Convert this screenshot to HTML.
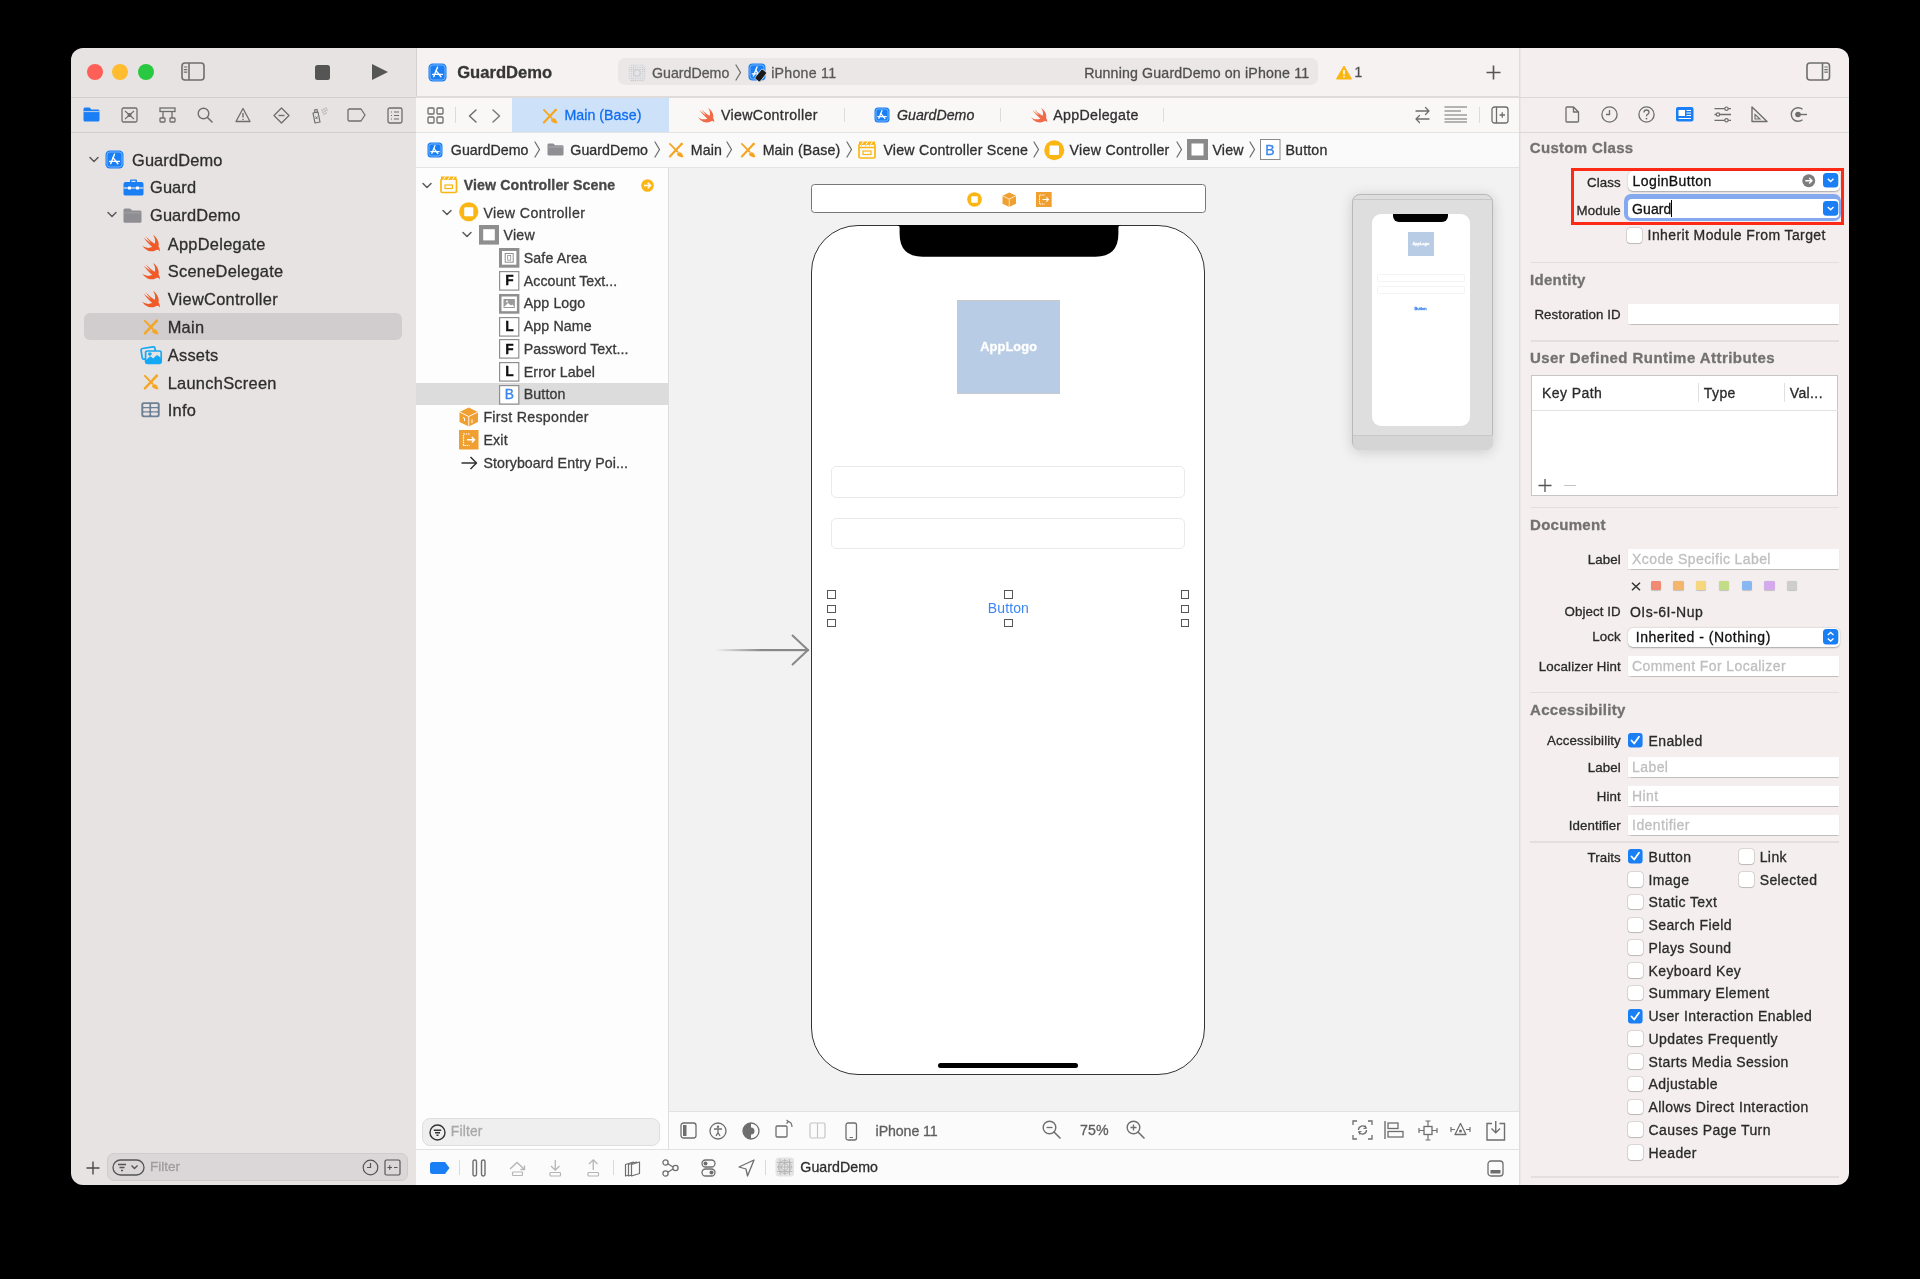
<!DOCTYPE html>
<html><head><meta charset="utf-8"><style>
html,body{margin:0;padding:0;}
body{width:1920px;height:1279px;background:#000;position:relative;overflow:hidden;font-family:"Liberation Sans", sans-serif;}
#w{position:absolute;left:0;top:0;width:1920px;height:1279px;clip-path:inset(48px 71px 94px 71px round 12px);will-change:transform;}
.t{position:absolute;white-space:nowrap;-webkit-font-smoothing:antialiased;-webkit-text-stroke-width:0.3px;}
.r{position:absolute;}
svg.r{overflow:visible;}
</style></head><body><div id="w">
<div class="r" style="left:71.00px;top:48.00px;width:345.00px;height:1137.00px;background:#e8e3e3;"></div>
<div class="r" style="left:416.00px;top:48.00px;width:1103.00px;height:49.00px;background:#f7f2f2;"></div>
<div class="r" style="left:1519.00px;top:48.00px;width:330.00px;height:1137.00px;background:#f4eeee;"></div>
<div class="r" style="left:71.00px;top:96.50px;width:345.00px;height:1.00px;background:#d2cdcd;"></div>
<div class="r" style="left:71.00px;top:132.00px;width:345.00px;height:1.00px;background:#d2cdcd;"></div>
<div class="r" style="left:415.50px;top:48.00px;width:1.00px;height:1137.00px;background:#d6d1d1;"></div>
<div class="r" style="left:416.00px;top:97.00px;width:1103.00px;height:35.00px;background:#faf7f7;"></div>
<div class="r" style="left:416.00px;top:96.20px;width:1103.00px;height:1.50px;background:#e0dbdb;"></div>
<div class="r" style="left:416.00px;top:132.00px;width:1103.00px;height:34.50px;background:#fbfafa;"></div>
<div class="r" style="left:416.00px;top:131.50px;width:1103.00px;height:1.00px;background:#e6e3e3;"></div>
<div class="r" style="left:416.00px;top:166.50px;width:1103.00px;height:1.00px;background:#e3e3e3;"></div>
<div class="r" style="left:416.00px;top:167.50px;width:252.00px;height:981.50px;background:#fdfdfd;"></div>
<div class="r" style="left:668.00px;top:167.50px;width:851.00px;height:943.50px;background:#f2f2f2;"></div>
<div class="r" style="left:668.00px;top:1111.00px;width:851.00px;height:38.00px;background:#fbfbfb;"></div>
<div class="r" style="left:668.00px;top:1110.50px;width:851.00px;height:1.00px;background:#e2e2e2;"></div>
<div class="r" style="left:416.00px;top:1149.00px;width:1103.00px;height:36.00px;background:#fbfbfb;"></div>
<div class="r" style="left:416.00px;top:1148.50px;width:1103.00px;height:1.00px;background:#e2e2e2;"></div>
<div class="r" style="left:1518.80px;top:48.00px;width:1.40px;height:1137.00px;background:#dfdcdc;"></div>
<div class="r" style="left:1520.20px;top:48.00px;width:1.20px;height:1137.00px;background:#ebe7e8;"></div>
<div class="r" style="left:667.50px;top:167.50px;width:1.00px;height:981.50px;background:#dedede;"></div>
<div class="r" style="left:1519.00px;top:96.50px;width:330.00px;height:1.00px;background:#ddd8d8;"></div>
<div class="r" style="left:1519.00px;top:132.00px;width:330.00px;height:1.00px;background:#ddd8d8;"></div>
<div class="r" style="left:87.00px;top:64.40px;width:16.00px;height:16.00px;background:#fe5f57;border-radius:8px;"></div>
<div class="r" style="left:112.30px;top:64.40px;width:16.00px;height:16.00px;background:#febc2e;border-radius:8px;"></div>
<div class="r" style="left:137.50px;top:64.40px;width:16.00px;height:16.00px;background:#28c840;border-radius:8px;"></div>
<svg class="r" style="left:181.00px;top:62.00px;" width="24" height="20" viewBox="0 0 24 20"><rect x="1" y="1" width="22" height="17" rx="3" fill="none" stroke="#6e6e6e" stroke-width="1.6"/><path d="M8,1 L8,18" stroke="#6e6e6e" stroke-width="1.6"/><path d="M2.8,5 L6.3,5 M2.8,7.6 L6.3,7.6 M2.8,10.2 L6.3,10.2" stroke="#6e6e6e" stroke-width="1.2"/></svg>
<div class="r" style="left:314.50px;top:64.70px;width:15.50px;height:15.50px;background:#555555;border-radius:2.5px;"></div>
<svg class="r" style="left:371.00px;top:63.00px;" width="18" height="18" viewBox="0 0 18 18"><path d="M1,1 L17,9 L1,17 Z" fill="#555"/></svg>
<svg class="r" style="left:83.00px;top:107.00px;" width="17" height="15" viewBox="0 0 17 15"><path fill="#1a7ff5" d="M0.5,2 Q0.5,0.5 2,0.5 L6,0.5 Q7,0.5 7.6,1.4 L8.3,2.4 L15,2.4 Q16.5,2.4 16.5,4 L16.5,13 Q16.5,14.5 15,14.5 L2,14.5 Q0.5,14.5 0.5,13 Z"/><path d="M0.5,4.6 L16.5,4.6" stroke="#e8e3e3" stroke-width="0.8"/></svg>
<svg class="r" style="left:121.00px;top:107.00px;" width="17" height="16" viewBox="0 0 17 16"><rect x="1" y="1" width="15" height="14" rx="1.5" fill="none" stroke="#6e6e6e" stroke-width="1.3"/><path d="M4,4 L13,12 M13,4 L4,12" stroke="#6e6e6e" stroke-width="1.1"/><circle cx="8.5" cy="8" r="2" fill="#6e6e6e"/></svg>
<svg class="r" style="left:158.50px;top:107.00px;" width="17" height="16" viewBox="0 0 17 16"><rect x="1" y="1" width="15" height="3.5" fill="none" stroke="#6e6e6e" stroke-width="1.3"/><path d="M4,4.5 L4,11 M13,4.5 L13,11" stroke="#6e6e6e" stroke-width="1.3"/><rect x="1" y="11" width="5" height="4" rx="0.8" fill="none" stroke="#6e6e6e" stroke-width="1.3"/><rect x="11" y="11" width="5" height="4" rx="0.8" fill="none" stroke="#6e6e6e" stroke-width="1.3"/></svg>
<svg class="r" style="left:196.50px;top:107.00px;" width="16" height="16" viewBox="0 0 16 16"><circle cx="6.5" cy="6.5" r="5.3" fill="none" stroke="#6e6e6e" stroke-width="1.4"/><path d="M10.5,10.5 L15,15" stroke="#6e6e6e" stroke-width="1.6" stroke-linecap="round"/></svg>
<svg class="r" style="left:234.50px;top:107.00px;" width="16" height="16" viewBox="0 0 16 16"><path d="M8,1.5 L15,14.5 L1,14.5 Z" fill="none" stroke="#6e6e6e" stroke-width="1.3" stroke-linejoin="round"/><path d="M8,6 L8,10.5" stroke="#6e6e6e" stroke-width="1.4"/><circle cx="8" cy="12.5" r="0.8" fill="#6e6e6e"/></svg>
<svg class="r" style="left:272.50px;top:106.50px;" width="17" height="17" viewBox="0 0 17 17"><path d="M8.5,1 L16,8.5 L8.5,16 L1,8.5 Z" fill="none" stroke="#6e6e6e" stroke-width="1.3" stroke-linejoin="round"/><path d="M5.5,8.5 L11.5,8.5" stroke="#6e6e6e" stroke-width="1.4"/></svg>
<svg class="r" style="left:309.50px;top:106.00px;" width="19" height="18" viewBox="0 0 19 18"><path d="M3,7 L8,6 L10,16 L5,17 Z" fill="none" stroke="#6e6e6e" stroke-width="1.2" stroke-linejoin="round"/><path d="M4.5,4 L7,3.5 L7.5,6 L5,6.5 Z" fill="none" stroke="#6e6e6e" stroke-width="1.1"/><path d="M5.5,10.5 L7.5,13 M7.5,10.5 L5.5,13" stroke="#6e6e6e" stroke-width="1"/><g fill="#6e6e6e"><circle cx="12" cy="4" r="0.6"/><circle cx="14" cy="3" r="0.6"/><circle cx="16" cy="2" r="0.6"/><circle cx="13" cy="6" r="0.6"/><circle cx="15" cy="5" r="0.6"/><circle cx="17" cy="4" r="0.6"/><circle cx="14" cy="8" r="0.6"/><circle cx="16" cy="7" r="0.6"/></g></svg>
<svg class="r" style="left:347.00px;top:107.00px;" width="19" height="16" viewBox="0 0 19 16"><path d="M1,3.5 Q1,2 2.5,2 L14,2 L18,8 L14,14 L2.5,14 Q1,14 1,12.5 Z" fill="none" stroke="#6e6e6e" stroke-width="1.3" stroke-linejoin="round"/></svg>
<svg class="r" style="left:386.50px;top:106.50px;" width="16" height="17" viewBox="0 0 16 17"><rect x="1" y="1" width="14" height="15" rx="1.8" fill="none" stroke="#6e6e6e" stroke-width="1.3"/><path d="M4,5 L5,5 M7,5 L12,5 M4,8.5 L5,8.5 M7,8.5 L12,8.5 M4,12 L5,12 M7,12 L12,12" stroke="#6e6e6e" stroke-width="1.2"/></svg>
<svg class="r" style="left:89.00px;top:156.00px;" width="10" height="8" viewBox="0 0 10 8"><path d="M1,1.5 L5,5.5 L9,1.5" stroke="#5a5a5a" stroke-width="1.5" fill="none" stroke-linecap="round" stroke-linejoin="round"/></svg>
<svg class="r" style="left:105.00px;top:150.00px;" width="19" height="19" viewBox="0 0 19 19"><rect x="0.5" y="0.5" width="18" height="18" rx="4.2" fill="#1a7ff5"/><rect x="2" y="2" width="15" height="15" rx="2.9" fill="none" stroke="#8cc0ff" stroke-width="0.8"/><g stroke="#fff" stroke-width="1.43" stroke-linecap="round" fill="none"><path d="M9.5,4.2 L5.7,13.7"/><path d="M8.0,7.6 L12.9,13.7"/><path d="M4.6,11.4 L14.4,11.4"/></g></svg>
<div class="t" style="top:151.52px;font-size:16.4px;line-height:16.4px;color:#2e2e2e;letter-spacing:0.13px;left:132.00px;">GuardDemo</div>
<svg class="r" style="left:122.50px;top:179.00px;" width="21" height="17" viewBox="0 0 21 17"><path fill="#1a7ff5" d="M7,3 L7,1.5 Q7,0.5 8,0.5 L13,0.5 Q14,0.5 14,1.5 L14,3 L18.5,3 Q20.5,3 20.5,5 L20.5,15 Q20.5,16.5 18.5,16.5 L2.5,16.5 Q0.5,16.5 0.5,15 L0.5,5 Q0.5,3 2.5,3 Z M8.5,1.8 L8.5,3 L12.5,3 L12.5,1.8 Z"/><path d="M0.5,9 L20.5,9" stroke="#e8e3e3" stroke-width="1.2"/><rect x="5" y="7.5" width="3" height="3" rx="0.5" fill="#fff"/><rect x="13" y="7.5" width="3" height="3" rx="0.5" fill="#fff"/></svg>
<div class="t" style="top:179.42px;font-size:16.4px;line-height:16.4px;color:#2e2e2e;letter-spacing:0.13px;left:150.00px;">Guard</div>
<svg class="r" style="left:106.50px;top:211.00px;" width="10" height="8" viewBox="0 0 10 8"><path d="M1,1.5 L5,5.5 L9,1.5" stroke="#5a5a5a" stroke-width="1.5" fill="none" stroke-linecap="round" stroke-linejoin="round"/></svg>
<svg class="r" style="left:123.00px;top:207.50px;" width="19" height="15.5" viewBox="0 0 19 15.5"><path fill="#8e8e93" d="M0.5,2 Q0.5,0.5 2,0.5 L6.5,0.5 Q7.5,0.5 8.2,1.5 L9,2.5 L17,2.5 Q18.5,2.5 18.5,4 L18.5,13.5 Q18.5,14.8 17,14.8 L2,14.8 Q0.5,14.8 0.5,13.5 Z"/><path fill="#a9a9ad" d="M0.5,4.5 L18.5,4.5 L18.5,5.2 L0.5,5.2 Z"/></svg>
<div class="t" style="top:207.22px;font-size:16.4px;line-height:16.4px;color:#2e2e2e;letter-spacing:0.13px;left:150.00px;">GuardDemo</div>
<div class="r" style="left:84.00px;top:312.50px;width:318.00px;height:27.50px;background:#d1cccd;border-radius:6px;"></div>
<svg class="r" style="left:141.50px;top:235.00px;" width="18" height="17" viewBox="0 0 18 17"><svg x="0" y="0" width="18" height="17" viewBox="2.4 3.3 18.2 16.9" preserveAspectRatio="none"><path fill="#f05a28" d="M13.543 3.41c4.114 2.47 6.545 7.162 5.549 11.131-.024.093-.05.181-.076.272l.002.001c2.062 2.538 1.5 5.258 1.236 4.745-1.072-2.086-3.066-1.568-4.088-1.043a6.803 6.803 0 0 1-.281.158l-.02.012-.002.002c-2.115 1.123-4.957 1.205-7.812-.022a12.568 12.568 0 0 1-5.640-4.838c.649.48 1.350.902 2.097 1.252 3.019 1.414 6.051 1.311 8.197-.002C9.651 12.730 7.101 9.670 5.146 7.191a10.628 10.628 0 0 1-1.005-1.384c2.340 2.142 6.038 4.830 7.365 5.576C8.690 8.408 6.208 4.743 6.324 4.860c4.436 4.470 8.528 6.996 8.528 6.996.154.085.270.154.360.213.085-.215.160-.437.224-.668.711-2.588-.090-5.548-1.893-7.992z"/></svg></svg>
<div class="t" style="top:235.62px;font-size:16.4px;line-height:16.4px;color:#2e2e2e;letter-spacing:0.28px;left:167.70px;">AppDelegate</div>
<svg class="r" style="left:141.50px;top:262.78px;" width="18" height="17" viewBox="0 0 18 17"><svg x="0" y="0" width="18" height="17" viewBox="2.4 3.3 18.2 16.9" preserveAspectRatio="none"><path fill="#f05a28" d="M13.543 3.41c4.114 2.47 6.545 7.162 5.549 11.131-.024.093-.05.181-.076.272l.002.001c2.062 2.538 1.5 5.258 1.236 4.745-1.072-2.086-3.066-1.568-4.088-1.043a6.803 6.803 0 0 1-.281.158l-.02.012-.002.002c-2.115 1.123-4.957 1.205-7.812-.022a12.568 12.568 0 0 1-5.640-4.838c.649.48 1.350.902 2.097 1.252 3.019 1.414 6.051 1.311 8.197-.002C9.651 12.730 7.101 9.670 5.146 7.191a10.628 10.628 0 0 1-1.005-1.384c2.340 2.142 6.038 4.830 7.365 5.576C8.690 8.408 6.208 4.743 6.324 4.860c4.436 4.470 8.528 6.996 8.528 6.996.154.085.270.154.360.213.085-.215.160-.437.224-.668.711-2.588-.090-5.548-1.893-7.992z"/></svg></svg>
<div class="t" style="top:263.40px;font-size:16.4px;line-height:16.4px;color:#2e2e2e;letter-spacing:0.28px;left:167.70px;">SceneDelegate</div>
<svg class="r" style="left:141.50px;top:290.56px;" width="18" height="17" viewBox="0 0 18 17"><svg x="0" y="0" width="18" height="17" viewBox="2.4 3.3 18.2 16.9" preserveAspectRatio="none"><path fill="#f05a28" d="M13.543 3.41c4.114 2.47 6.545 7.162 5.549 11.131-.024.093-.05.181-.076.272l.002.001c2.062 2.538 1.5 5.258 1.236 4.745-1.072-2.086-3.066-1.568-4.088-1.043a6.803 6.803 0 0 1-.281.158l-.02.012-.002.002c-2.115 1.123-4.957 1.205-7.812-.022a12.568 12.568 0 0 1-5.640-4.838c.649.48 1.350.902 2.097 1.252 3.019 1.414 6.051 1.311 8.197-.002C9.651 12.730 7.101 9.670 5.146 7.191a10.628 10.628 0 0 1-1.005-1.384c2.340 2.142 6.038 4.830 7.365 5.576C8.690 8.408 6.208 4.743 6.324 4.860c4.436 4.470 8.528 6.996 8.528 6.996.154.085.270.154.360.213.085-.215.160-.437.224-.668.711-2.588-.090-5.548-1.893-7.992z"/></svg></svg>
<div class="t" style="top:291.18px;font-size:16.4px;line-height:16.4px;color:#2e2e2e;letter-spacing:0.28px;left:167.70px;">ViewController</div>
<svg class="r" style="left:142.50px;top:318.84px;" width="16" height="16" viewBox="0 0 16 16"><g stroke="#f5a623" stroke-linecap="round" fill="none"><path d="M13.6,1.9 L1.9,14.4" stroke-width="2.42"/><path d="M1.9,1.9 L9.6,9.8" stroke-width="1.99"/></g><circle cx="13.7" cy="1.9" r="1.31" fill="#f5a623"/><path fill="#f5a623" d="M9.2,11.4 C10.2,9.9 12.2,9.7 13.4,11 C14.6,12.2 15,13.8 15.6,15.3 C13.8,15.4 11.6,15.2 10.3,14.1 C9.3,13.3 8.8,12.2 9.2,11.4 Z"/></svg>
<div class="t" style="top:318.96px;font-size:16.4px;line-height:16.4px;color:#2e2e2e;letter-spacing:0.28px;left:167.70px;">Main</div>
<svg class="r" style="left:139.50px;top:345.42px;" width="23" height="19.5" viewBox="0 0 23 19.5"><rect x="1.6" y="2.6" width="14" height="10.8" rx="1.6" transform="rotate(-9 8.6 8)" fill="#e8e3e3" stroke="#14a9f5" stroke-width="1.7"/><rect x="5.6" y="6" width="15.6" height="12.4" rx="1.6" fill="#e8e3e3" stroke="#14a9f5" stroke-width="1.7"/><path d="M5.6,15.5 L9.5,11.8 Q10.3,11.2 11.1,11.8 L13.2,13.4 L16.2,10.6 Q17.1,9.9 18,10.6 L21.2,13.2 L21.2,17.4 Q21.2,18.4 20.2,18.4 L6.6,18.4 Q5.6,18.4 5.6,17.4 Z" fill="#14a9f5"/><path d="M8.2,8.4 Q8.2,7.6 9,7.6 L10.8,7.6 Q11.6,7.6 11.6,8.4 L11.6,9.6 Q11.6,10.4 10.8,10.4 L9.9,10.4 L9,11.4 L9,10.4 Q8.2,10.4 8.2,9.6 Z" fill="#14a9f5"/></svg>
<div class="t" style="top:346.74px;font-size:16.4px;line-height:16.4px;color:#2e2e2e;letter-spacing:0.28px;left:167.70px;">Assets</div>
<svg class="r" style="left:142.50px;top:374.40px;" width="16" height="16" viewBox="0 0 16 16"><g stroke="#f5a623" stroke-linecap="round" fill="none"><path d="M13.6,1.9 L1.9,14.4" stroke-width="2.42"/><path d="M1.9,1.9 L9.6,9.8" stroke-width="1.99"/></g><circle cx="13.7" cy="1.9" r="1.31" fill="#f5a623"/><path fill="#f5a623" d="M9.2,11.4 C10.2,9.9 12.2,9.7 13.4,11 C14.6,12.2 15,13.8 15.6,15.3 C13.8,15.4 11.6,15.2 10.3,14.1 C9.3,13.3 8.8,12.2 9.2,11.4 Z"/></svg>
<div class="t" style="top:374.52px;font-size:16.4px;line-height:16.4px;color:#2e2e2e;letter-spacing:0.28px;left:167.70px;">LaunchScreen</div>
<svg class="r" style="left:141.00px;top:402.38px;" width="19" height="15.5" viewBox="0 0 19 15.5"><rect x="0.3" y="0.3" width="18.4" height="14.9" rx="2.2" fill="#6d8196"/><g fill="#e8e3e3"><rect x="2.2" y="2.1" width="6.3" height="3" rx="0.8"/><rect x="10" y="2.1" width="6.8" height="3" rx="0.8"/><rect x="2.2" y="6.25" width="6.3" height="3" rx="0.8"/><rect x="10" y="6.25" width="6.8" height="3" rx="0.8"/><rect x="2.2" y="10.4" width="6.3" height="3" rx="0.8"/><rect x="10" y="10.4" width="6.8" height="3" rx="0.8"/></g></svg>
<div class="t" style="top:402.30px;font-size:16.4px;line-height:16.4px;color:#2e2e2e;letter-spacing:0.28px;left:167.70px;">Info</div>
<svg class="r" style="left:86.00px;top:1161.00px;" width="14" height="14" viewBox="0 0 14 14"><path d="M7,0.5 L7,13.5 M0.5,7 L13.5,7" stroke="#4a4a4a" stroke-width="1.4"/></svg>
<div class="r" style="left:106.50px;top:1153.30px;width:301.50px;height:28.00px;background:#dbd6d7;border:1px solid #d0cbcc;box-sizing:border-box;border-radius:7px;"></div>
<svg class="r" style="left:112.00px;top:1159.00px;" width="33" height="17" viewBox="0 0 33 17"><rect x="1" y="1" width="31" height="15" rx="7.5" fill="none" stroke="#555" stroke-width="1.3"/><path d="M6,5.5 L14,5.5 M7.5,8.5 L12.5,8.5 M9,11.5 L11,11.5" stroke="#555" stroke-width="1.3"/><path d="M19.5,6.5 L22.5,9.5 L25.5,6.5" stroke="#555" stroke-width="1.4" fill="none"/></svg>
<div class="t" style="top:1160.37px;font-size:13.5px;line-height:13.5px;color:#a09c9d;left:150.00px;">Filter</div>
<svg class="r" style="left:362.00px;top:1159.00px;" width="17" height="17" viewBox="0 0 17 17"><circle cx="8.5" cy="8.5" r="7.3" fill="none" stroke="#555" stroke-width="1.2"/><path d="M8.5,4 L8.5,8.5 L5,8.5" stroke="#555" stroke-width="1.2" fill="none"/></svg>
<svg class="r" style="left:384.00px;top:1159.00px;" width="17" height="17" viewBox="0 0 17 17"><rect x="1" y="1" width="15" height="15" rx="1.5" fill="none" stroke="#555" stroke-width="1.2"/><path d="M3.5,8.5 L8,8.5 M5.75,6.25 L5.75,10.75 M10,8.5 L13.5,8.5" stroke="#555" stroke-width="1.1"/></svg>
<svg class="r" style="left:428.00px;top:63.00px;" width="19" height="19" viewBox="0 0 19 19"><rect x="0.5" y="0.5" width="18" height="18" rx="4.2" fill="#1a7ff5"/><rect x="2" y="2" width="15" height="15" rx="2.9" fill="none" stroke="#8cc0ff" stroke-width="0.8"/><g stroke="#fff" stroke-width="1.43" stroke-linecap="round" fill="none"><path d="M9.5,4.2 L5.7,13.7"/><path d="M8.0,7.6 L12.9,13.7"/><path d="M4.6,11.4 L14.4,11.4"/></g></svg>
<div class="t" style="top:64.95px;font-size:16.6px;line-height:16.6px;color:#363636;font-weight:700;left:457.20px;">GuardDemo</div>
<div class="r" style="left:618.00px;top:58.40px;width:700.00px;height:27.00px;background:#ece7e7;border-radius:7px;"></div>
<svg class="r" style="left:627.50px;top:63.50px;" width="18" height="18" viewBox="0 0 18 18"><defs><pattern id="dp" width="2.2" height="2.2" patternUnits="userSpaceOnUse"><circle cx="1.1" cy="1.1" r="0.6" fill="#bfc3c9"/></pattern></defs><rect x="0.5" y="0.5" width="17" height="17" rx="4.5" fill="#e6e4e6"/><rect x="0.5" y="0.5" width="17" height="17" rx="4.5" fill="url(#dp)"/><circle cx="9" cy="9" r="3.3" fill="#e6e4e6" stroke="#c4c7cc" stroke-width="0.9"/></svg>
<div class="t" style="top:65.78px;font-size:14.2px;line-height:14.2px;color:#595959;left:652.00px;">GuardDemo</div>
<svg class="r" style="left:735.00px;top:63.50px;" width="8" height="18" viewBox="0 0 8 18"><path d="M1,1 L5.5,8.5 L1,16" stroke="#6b6b6b" stroke-width="1.2" fill="none" stroke-linecap="round"/></svg>
<svg class="r" style="left:747.50px;top:63.00px;" width="19" height="19" viewBox="0 0 19 19"><rect x="0.5" y="0.5" width="17" height="17" rx="4.0" fill="#1a7ff5"/><rect x="2" y="2" width="14" height="14" rx="2.7" fill="none" stroke="#8cc0ff" stroke-width="0.8"/><g stroke="#fff" stroke-width="1.35" stroke-linecap="round" fill="none"><path d="M9.0,4.0 L5.4,13.0"/><path d="M7.6,7.2 L12.2,13.0"/><path d="M4.3,10.8 L13.7,10.8"/></g><rect x="9.5" y="6.5" width="6.5" height="12" rx="1.3" transform="rotate(38 12.75 12.5)" fill="#1a1a1a" stroke="#fff" stroke-width="0.6"/></svg>
<div class="t" style="top:65.78px;font-size:14.2px;line-height:14.2px;color:#595959;letter-spacing:0.25px;left:771.20px;">iPhone 11</div>
<div class="t" style="top:65.78px;font-size:14.2px;line-height:14.2px;color:#505050;letter-spacing:0.15px;right:610.80px;">Running GuardDemo on iPhone 11</div>
<svg class="r" style="left:1335.50px;top:64.50px;" width="15" height="14.5" viewBox="0 0 15 14.5"><path d="M8,1 L15.5,14 L0.5,14 Z" fill="#fbb614" stroke="#fbb614" stroke-linejoin="round" stroke-width="1"/><path d="M8,5 L8,9.5" stroke="#fff" stroke-width="1.6"/><circle cx="8" cy="11.6" r="0.9" fill="#fff"/></svg>
<div class="t" style="top:66.32px;font-size:13.8px;line-height:13.8px;color:#505050;left:1354.50px;">1</div>
<svg class="r" style="left:1486.00px;top:64.50px;" width="15" height="15" viewBox="0 0 15 15"><path d="M7.5,0.5 L7.5,14.5 M0.5,7.5 L14.5,7.5" stroke="#555" stroke-width="1.6"/></svg>
<svg class="r" style="left:427.00px;top:106.50px;" width="17" height="17" viewBox="0 0 17 17"><g fill="none" stroke="#6e6e6e" stroke-width="1.3"><rect x="1" y="1" width="6" height="6" rx="1"/><rect x="10" y="1" width="6" height="6" rx="1"/><rect x="1" y="10" width="6" height="6" rx="1"/><rect x="10" y="10" width="6" height="6" rx="1"/></g></svg>
<div class="r" style="left:455.00px;top:107.00px;width:1.00px;height:16.00px;background:#dcdcdc;"></div>
<svg class="r" style="left:466.50px;top:108.50px;" width="11" height="14" viewBox="0 0 11 14"><path d="M9,1 L2.5,7 L9,13" stroke="#6e6e6e" stroke-width="1.5" fill="none" stroke-linecap="round" stroke-linejoin="round"/></svg>
<svg class="r" style="left:490.50px;top:108.50px;" width="11" height="14" viewBox="0 0 11 14"><path d="M2,1 L8.5,7 L2,13" stroke="#7a7a7a" stroke-width="1.5" fill="none" stroke-linecap="round" stroke-linejoin="round"/></svg>
<div class="r" style="left:512.00px;top:97.50px;width:156.50px;height:34.50px;background:#cde1f8;"></div>
<svg class="r" style="left:542.00px;top:107.50px;" width="15" height="15" viewBox="0 0 15 15"><g stroke="#f5a623" stroke-linecap="round" fill="none"><path d="M13.6,1.9 L1.9,14.4" stroke-width="2.18"/><path d="M1.9,1.9 L9.6,9.8" stroke-width="1.80"/></g><circle cx="13.7" cy="1.9" r="1.19" fill="#f5a623"/><path fill="#f5a623" d="M9.2,11.4 C10.2,9.9 12.2,9.7 13.4,11 C14.6,12.2 15,13.8 15.6,15.3 C13.8,15.4 11.6,15.2 10.3,14.1 C9.3,13.3 8.8,12.2 9.2,11.4 Z"/></svg>
<div class="t" style="top:107.58px;font-size:14.2px;line-height:14.2px;color:#0f6ef0;letter-spacing:0.05px;left:564.40px;">Main (Base)</div>
<svg class="r" style="left:698.00px;top:107.80px;" width="16.5" height="15" viewBox="0 0 16.5 15"><svg x="0" y="0" width="16.5" height="15" viewBox="2.4 3.3 18.2 16.9" preserveAspectRatio="none"><path fill="#f26b48" d="M13.543 3.41c4.114 2.47 6.545 7.162 5.549 11.131-.024.093-.05.181-.076.272l.002.001c2.062 2.538 1.5 5.258 1.236 4.745-1.072-2.086-3.066-1.568-4.088-1.043a6.803 6.803 0 0 1-.281.158l-.02.012-.002.002c-2.115 1.123-4.957 1.205-7.812-.022a12.568 12.568 0 0 1-5.640-4.838c.649.48 1.350.902 2.097 1.252 3.019 1.414 6.051 1.311 8.197-.002C9.651 12.730 7.101 9.670 5.146 7.191a10.628 10.628 0 0 1-1.005-1.384c2.340 2.142 6.038 4.830 7.365 5.576C8.690 8.408 6.208 4.743 6.324 4.860c4.436 4.470 8.528 6.996 8.528 6.996.154.085.270.154.360.213.085-.215.160-.437.224-.668.711-2.588-.090-5.548-1.893-7.992z"/></svg></svg>
<div class="t" style="top:107.58px;font-size:14.2px;line-height:14.2px;color:#303030;letter-spacing:0.35px;left:720.90px;">ViewController</div>
<div class="r" style="left:843.50px;top:107.50px;width:1.00px;height:14.00px;background:#dcdcdc;"></div>
<svg class="r" style="left:874.00px;top:106.50px;" width="16" height="16" viewBox="0 0 16 16"><rect x="0.5" y="0.5" width="15" height="15" rx="3.5" fill="#1a7ff5"/><rect x="2" y="2" width="12" height="12" rx="2.4" fill="none" stroke="#8cc0ff" stroke-width="0.8"/><g stroke="#fff" stroke-width="1.20" stroke-linecap="round" fill="none"><path d="M8.0,3.5 L4.8,11.5"/><path d="M6.7,6.4 L10.9,11.5"/><path d="M3.8,9.6 L12.2,9.6"/></g></svg>
<div class="t" style="top:107.58px;font-size:14.2px;line-height:14.2px;color:#303030;font-style:italic;left:897.00px;">GuardDemo</div>
<div class="r" style="left:999.50px;top:107.50px;width:1.00px;height:14.00px;background:#dcdcdc;"></div>
<svg class="r" style="left:1030.50px;top:107.80px;" width="16.5" height="15" viewBox="0 0 16.5 15"><svg x="0" y="0" width="16.5" height="15" viewBox="2.4 3.3 18.2 16.9" preserveAspectRatio="none"><path fill="#f26b48" d="M13.543 3.41c4.114 2.47 6.545 7.162 5.549 11.131-.024.093-.05.181-.076.272l.002.001c2.062 2.538 1.5 5.258 1.236 4.745-1.072-2.086-3.066-1.568-4.088-1.043a6.803 6.803 0 0 1-.281.158l-.02.012-.002.002c-2.115 1.123-4.957 1.205-7.812-.022a12.568 12.568 0 0 1-5.640-4.838c.649.48 1.350.902 2.097 1.252 3.019 1.414 6.051 1.311 8.197-.002C9.651 12.730 7.101 9.670 5.146 7.191a10.628 10.628 0 0 1-1.005-1.384c2.340 2.142 6.038 4.830 7.365 5.576C8.690 8.408 6.208 4.743 6.324 4.860c4.436 4.470 8.528 6.996 8.528 6.996.154.085.270.154.360.213.085-.215.160-.437.224-.668.711-2.588-.090-5.548-1.893-7.992z"/></svg></svg>
<div class="t" style="top:107.58px;font-size:14.2px;line-height:14.2px;color:#303030;letter-spacing:0.3px;left:1053.30px;">AppDelegate</div>
<div class="r" style="left:1163.00px;top:107.50px;width:1.00px;height:14.00px;background:#dcdcdc;"></div>
<svg class="r" style="left:1414.00px;top:105.50px;" width="17" height="18" viewBox="0 0 17 18"><g stroke="#6e6e6e" stroke-width="1.3" fill="none" stroke-linecap="round" stroke-linejoin="round"><path d="M2,5 L15,5 M11.5,1.5 L15,5 L11.5,8.5"/><path d="M15,13 L2,13 M5.5,9.5 L2,13 L5.5,16.5"/></g></svg>
<svg class="r" style="left:1444.00px;top:106.00px;" width="24" height="17" viewBox="0 0 24 17"><g stroke="#6e6e6e" stroke-width="1.2"><path d="M0.5,1 L23,1 M0.5,5 L17,5 M0.5,9 L23,9 M0.5,13 L23,13 M0.5,16 L23,16"/></g></svg>
<div class="r" style="left:1478.50px;top:107.00px;width:1.00px;height:16.00px;background:#dcdcdc;"></div>
<svg class="r" style="left:1491.00px;top:105.50px;" width="18" height="18" viewBox="0 0 18 18"><rect x="1" y="1" width="16" height="16" rx="2.5" fill="none" stroke="#6e6e6e" stroke-width="1.3"/><path d="M5.5,1 L5.5,17 M8.5,9 L14,9 M11.25,6.25 L11.25,11.75" stroke="#6e6e6e" stroke-width="1.3"/></svg>
<svg class="r" style="left:426.50px;top:141.50px;" width="16" height="16" viewBox="0 0 16 16"><rect x="0.5" y="0.5" width="15" height="15" rx="3.5" fill="#1a7ff5"/><rect x="2" y="2" width="12" height="12" rx="2.4" fill="none" stroke="#8cc0ff" stroke-width="0.8"/><g stroke="#fff" stroke-width="1.20" stroke-linecap="round" fill="none"><path d="M8.0,3.5 L4.8,11.5"/><path d="M6.7,6.4 L10.9,11.5"/><path d="M3.8,9.6 L12.2,9.6"/></g></svg>
<div class="t" style="top:142.98px;font-size:14.2px;line-height:14.2px;color:#303030;letter-spacing:0.05px;left:450.80px;">GuardDemo</div>
<svg class="r" style="left:533.50px;top:140.80px;" width="8" height="18" viewBox="0 0 8 18"><path d="M1,1 L5.5,8.5 L1,16" stroke="#6b6b6b" stroke-width="1.2" fill="none" stroke-linecap="round"/></svg>
<svg class="r" style="left:546.50px;top:143.20px;" width="17" height="13" viewBox="0 0 17 13"><path fill="#8e8e93" d="M0.5,1.8 Q0.5,0.5 1.8,0.5 L5.8,0.5 Q6.6,0.5 7.2,1.3 L7.8,2.2 L15,2.2 Q16.5,2.2 16.5,3.6 L16.5,11.5 Q16.5,12.5 15,12.5 L2,12.5 Q0.5,12.5 0.5,11.5 Z"/><path d="M0.5,4 L16.5,4" stroke="#b0b0b4" stroke-width="0.8"/></svg>
<div class="t" style="top:142.98px;font-size:14.2px;line-height:14.2px;color:#303030;letter-spacing:0.05px;left:570.30px;">GuardDemo</div>
<svg class="r" style="left:653.50px;top:140.80px;" width="8" height="18" viewBox="0 0 8 18"><path d="M1,1 L5.5,8.5 L1,16" stroke="#6b6b6b" stroke-width="1.2" fill="none" stroke-linecap="round"/></svg>
<svg class="r" style="left:667.50px;top:141.50px;" width="15" height="15" viewBox="0 0 15 15"><g stroke="#f5a623" stroke-linecap="round" fill="none"><path d="M13.6,1.9 L1.9,14.4" stroke-width="2.18"/><path d="M1.9,1.9 L9.6,9.8" stroke-width="1.80"/></g><circle cx="13.7" cy="1.9" r="1.19" fill="#f5a623"/><path fill="#f5a623" d="M9.2,11.4 C10.2,9.9 12.2,9.7 13.4,11 C14.6,12.2 15,13.8 15.6,15.3 C13.8,15.4 11.6,15.2 10.3,14.1 C9.3,13.3 8.8,12.2 9.2,11.4 Z"/></svg>
<div class="t" style="top:142.98px;font-size:14.2px;line-height:14.2px;color:#303030;letter-spacing:0.1px;left:690.80px;">Main</div>
<svg class="r" style="left:726.30px;top:140.80px;" width="8" height="18" viewBox="0 0 8 18"><path d="M1,1 L5.5,8.5 L1,16" stroke="#6b6b6b" stroke-width="1.2" fill="none" stroke-linecap="round"/></svg>
<svg class="r" style="left:739.50px;top:141.50px;" width="15" height="15" viewBox="0 0 15 15"><g stroke="#f5a623" stroke-linecap="round" fill="none"><path d="M13.6,1.9 L1.9,14.4" stroke-width="2.18"/><path d="M1.9,1.9 L9.6,9.8" stroke-width="1.80"/></g><circle cx="13.7" cy="1.9" r="1.19" fill="#f5a623"/><path fill="#f5a623" d="M9.2,11.4 C10.2,9.9 12.2,9.7 13.4,11 C14.6,12.2 15,13.8 15.6,15.3 C13.8,15.4 11.6,15.2 10.3,14.1 C9.3,13.3 8.8,12.2 9.2,11.4 Z"/></svg>
<div class="t" style="top:142.98px;font-size:14.2px;line-height:14.2px;color:#303030;letter-spacing:0.1px;left:762.70px;">Main (Base)</div>
<svg class="r" style="left:845.80px;top:140.80px;" width="8" height="18" viewBox="0 0 8 18"><path d="M1,1 L5.5,8.5 L1,16" stroke="#6b6b6b" stroke-width="1.2" fill="none" stroke-linecap="round"/></svg>
<svg class="r" style="left:858.00px;top:140.80px;" width="18" height="18" viewBox="0 0 18 18"><rect x="1" y="3" width="16" height="14" rx="1.5" fill="none" stroke="#fbb614" stroke-width="1.7"/><path d="M1,6.5 L17,6.5" stroke="#fbb614" stroke-width="1.5"/><path d="M3,4.7 L5,3 M7,4.7 L9,3 M11,4.7 L13,3" stroke="#fbb614" stroke-width="1"/><rect x="1" y="0.5" width="16" height="3" fill="#fbb614"/><path d="M3.5,3.5 L5.5,0.5 M8,3.5 L10,0.5 M12.5,3.5 L14.5,0.5" stroke="#fff" stroke-width="1"/><rect x="5" y="10" width="8" height="3.5" fill="none" stroke="#fbb614" stroke-width="1.2"/></svg>
<div class="t" style="top:142.98px;font-size:14.2px;line-height:14.2px;color:#303030;letter-spacing:0.22px;left:883.40px;">View Controller Scene</div>
<svg class="r" style="left:1032.80px;top:140.80px;" width="8" height="18" viewBox="0 0 8 18"><path d="M1,1 L5.5,8.5 L1,16" stroke="#6b6b6b" stroke-width="1.2" fill="none" stroke-linecap="round"/></svg>
<svg class="r" style="left:1044.00px;top:139.80px;" width="20.5" height="20.5" viewBox="0 0 20.5 20.5"><circle cx="10.25" cy="10.25" r="10" fill="#fbb614"/><rect x="5.5" y="5.5" width="9.5" height="9.5" rx="1" fill="#fff"/></svg>
<div class="t" style="top:142.98px;font-size:14.2px;line-height:14.2px;color:#303030;letter-spacing:0.27px;left:1069.60px;">View Controller</div>
<svg class="r" style="left:1176.00px;top:140.80px;" width="8" height="18" viewBox="0 0 8 18"><path d="M1,1 L5.5,8.5 L1,16" stroke="#6b6b6b" stroke-width="1.2" fill="none" stroke-linecap="round"/></svg>
<svg class="r" style="left:1186.50px;top:139.00px;" width="21" height="21" viewBox="0 0 21 21"><rect x="0" y="0" width="21" height="21" fill="#8a8a8a"/><rect x="4.5" y="4.5" width="12" height="12" fill="#fff"/></svg>
<div class="t" style="top:142.98px;font-size:14.2px;line-height:14.2px;color:#303030;letter-spacing:0.2px;left:1212.40px;">View</div>
<svg class="r" style="left:1249.00px;top:140.80px;" width="8" height="18" viewBox="0 0 8 18"><path d="M1,1 L5.5,8.5 L1,16" stroke="#6b6b6b" stroke-width="1.2" fill="none" stroke-linecap="round"/></svg>
<svg class="r" style="left:1259.80px;top:139.00px;" width="20.5" height="21" viewBox="0 0 20.5 21"><rect x="0.5" y="0.5" width="19.5" height="20" fill="#fff" stroke="#8a8a8a" stroke-width="1"/></svg>
<div class="t" style="top:143.35px;font-size:14px;line-height:14px;color:#3a85f0;left:970.00px;width:600px;text-align:center;">B</div>
<div class="t" style="top:142.98px;font-size:14.2px;line-height:14.2px;color:#303030;letter-spacing:0.15px;left:1285.50px;">Button</div>
<div class="r" style="left:416.00px;top:383.00px;width:251.50px;height:22.00px;background:#dcdcdc;"></div>
<svg class="r" style="left:421.50px;top:181.50px;" width="10" height="8" viewBox="0 0 10 8"><path d="M1,1.5 L5,5.5 L9,1.5" stroke="#5a5a5a" stroke-width="1.5" fill="none" stroke-linecap="round" stroke-linejoin="round"/></svg>
<svg class="r" style="left:440.00px;top:176.00px;" width="17.5" height="17.5" viewBox="0 0 17.5 17.5"><rect x="1" y="3" width="15.5" height="13.5" rx="1.5" fill="none" stroke="#fbb614" stroke-width="1.7"/><rect x="1" y="0.5" width="15.5" height="3" fill="#fbb614"/><path d="M3.5,3.5 L5.5,0.5 M8,3.5 L10,0.5 M12.5,3.5 L14.5,0.5" stroke="#fff" stroke-width="1"/><rect x="5" y="9" width="7.5" height="3.5" fill="none" stroke="#fbb614" stroke-width="1.2"/></svg>
<div class="t" style="top:177.58px;font-size:14.2px;line-height:14.2px;color:#484848;font-weight:700;letter-spacing:0.1px;left:463.70px;">View Controller Scene</div>
<svg class="r" style="left:641.00px;top:178.50px;" width="13" height="13" viewBox="0 0 13 13"><circle cx="6.5" cy="6.5" r="6.3" fill="#fbb614"/><path d="M3,6.5 L9.5,6.5 M6.8,3.8 L9.5,6.5 L6.8,9.2" stroke="#fff" stroke-width="1.6" fill="none"/></svg>
<svg class="r" style="left:441.50px;top:208.50px;" width="10" height="8" viewBox="0 0 10 8"><path d="M1,1.5 L5,5.5 L9,1.5" stroke="#5a5a5a" stroke-width="1.5" fill="none" stroke-linecap="round" stroke-linejoin="round"/></svg>
<svg class="r" style="left:459.30px;top:202.40px;" width="19.5" height="19.5" viewBox="0 0 19.5 19.5"><circle cx="9.75" cy="9.75" r="9.6" fill="#fbb614"/><rect x="5.2" y="5.2" width="9.1" height="9.1" rx="1" fill="#fff"/></svg>
<div class="t" style="top:205.98px;font-size:14.2px;line-height:14.2px;color:#3a3a3a;letter-spacing:0.4px;left:483.40px;">View Controller</div>
<svg class="r" style="left:461.70px;top:231.00px;" width="10" height="8" viewBox="0 0 10 8"><path d="M1,1.5 L5,5.5 L9,1.5" stroke="#5a5a5a" stroke-width="1.5" fill="none" stroke-linecap="round" stroke-linejoin="round"/></svg>
<svg class="r" style="left:479.00px;top:225.40px;" width="20" height="19.6" viewBox="0 0 20 19.6"><rect x="0" y="0" width="20" height="19.6" fill="#8f8f8f"/><rect x="4.2" y="4.2" width="11.6" height="11.2" fill="#fff"/></svg>
<div class="t" style="top:228.08px;font-size:14.2px;line-height:14.2px;color:#3a3a3a;letter-spacing:0.2px;left:503.60px;">View</div>
<svg class="r" style="left:499.20px;top:248.30px;" width="20.4" height="19.7" viewBox="0 0 20.4 19.7"><rect x="0" y="0" width="20.4" height="19.7" fill="#8f8f8f"/><rect x="3" y="3" width="14.4" height="13.7" fill="#fff"/><rect x="6.2" y="5.5" width="8" height="8.7" fill="none" stroke="#8f8f8f" stroke-width="1"/><rect x="8.7" y="7.5" width="3" height="4.7" fill="none" stroke="#8f8f8f" stroke-width="0.8"/></svg>
<div class="t" style="top:250.98px;font-size:14.2px;line-height:14.2px;color:#3a3a3a;letter-spacing:0.1px;left:523.80px;">Safe Area</div>
<svg class="r" style="left:499.20px;top:271.05px;" width="20.4" height="19.7" viewBox="0 0 20.4 19.7"><rect x="0.6" y="0.6" width="19.2" height="18.5" fill="#fff" stroke="#8f8f8f" stroke-width="1.2"/></svg>
<div class="t" style="top:274.47px;font-size:13.8px;line-height:13.8px;color:#111;font-weight:700;left:209.40px;width:600px;text-align:center;">F</div>
<div class="t" style="top:273.73px;font-size:14.2px;line-height:14.2px;color:#3a3a3a;letter-spacing:0.05px;left:523.80px;">Account Text...</div>
<svg class="r" style="left:499.20px;top:293.80px;" width="20.4" height="19.7" viewBox="0 0 20.4 19.7"><rect x="0" y="0" width="20.4" height="19.7" fill="#8f8f8f"/><rect x="2.5" y="2.5" width="15.4" height="14.7" fill="#fff"/><rect x="4.5" y="5" width="11.4" height="9" fill="#9a9a9a"/><path d="M5,13 L9,9 L12,11.5 L13.5,10.5 L15.5,13 Z" fill="#fff"/><circle cx="8" cy="7.5" r="1" fill="#fff"/></svg>
<div class="t" style="top:296.48px;font-size:14.2px;line-height:14.2px;color:#3a3a3a;letter-spacing:0.1px;left:523.80px;">App Logo</div>
<svg class="r" style="left:499.20px;top:316.55px;" width="20.4" height="19.7" viewBox="0 0 20.4 19.7"><rect x="0.6" y="0.6" width="19.2" height="18.5" fill="#fff" stroke="#8f8f8f" stroke-width="1.2"/></svg>
<div class="t" style="top:319.97px;font-size:13.8px;line-height:13.8px;color:#111;font-weight:700;left:209.40px;width:600px;text-align:center;">L</div>
<div class="t" style="top:319.23px;font-size:14.2px;line-height:14.2px;color:#3a3a3a;letter-spacing:0.1px;left:523.80px;">App Name</div>
<svg class="r" style="left:499.20px;top:339.30px;" width="20.4" height="19.7" viewBox="0 0 20.4 19.7"><rect x="0.6" y="0.6" width="19.2" height="18.5" fill="#fff" stroke="#8f8f8f" stroke-width="1.2"/></svg>
<div class="t" style="top:342.72px;font-size:13.8px;line-height:13.8px;color:#111;font-weight:700;left:209.40px;width:600px;text-align:center;">F</div>
<div class="t" style="top:341.98px;font-size:14.2px;line-height:14.2px;color:#3a3a3a;letter-spacing:0.05px;left:523.80px;">Password Text...</div>
<svg class="r" style="left:499.20px;top:362.05px;" width="20.4" height="19.7" viewBox="0 0 20.4 19.7"><rect x="0.6" y="0.6" width="19.2" height="18.5" fill="#fff" stroke="#8f8f8f" stroke-width="1.2"/></svg>
<div class="t" style="top:365.47px;font-size:13.8px;line-height:13.8px;color:#111;font-weight:700;left:209.40px;width:600px;text-align:center;">L</div>
<div class="t" style="top:364.73px;font-size:14.2px;line-height:14.2px;color:#3a3a3a;letter-spacing:0.1px;left:523.80px;">Error Label</div>
<svg class="r" style="left:499.20px;top:384.80px;" width="20.4" height="19.7" viewBox="0 0 20.4 19.7"><rect x="0.6" y="0.6" width="19.2" height="18.5" fill="#fff" stroke="#8f8f8f" stroke-width="1.2"/></svg>
<div class="t" style="top:388.22px;font-size:13.8px;line-height:13.8px;color:#3a85f0;left:209.40px;width:600px;text-align:center;">B</div>
<div class="t" style="top:387.48px;font-size:14.2px;line-height:14.2px;color:#3a3a3a;letter-spacing:0.1px;left:523.80px;">Button</div>
<svg class="r" style="left:459.30px;top:406.50px;" width="19.5" height="20" viewBox="0 0 19.5 20"><path d="M9.75,0.5 L19,5 L19,15 L9.75,19.5 L0.5,15 L0.5,5 Z" fill="#f0a030"/><path d="M0.5,5 L9.75,9.5 L19,5 M9.75,9.5 L9.75,19.5" stroke="#fff" stroke-width="0.9" fill="none"/><path d="M4,10.5 L5.5,11.2 L5.5,14 M13,12.5 L13,16" stroke="#fff" stroke-width="1" fill="none"/></svg>
<div class="t" style="top:410.48px;font-size:14.2px;line-height:14.2px;color:#3a3a3a;letter-spacing:0.3px;left:483.40px;">First Responder</div>
<svg class="r" style="left:459.30px;top:429.50px;" width="19.5" height="19.5" viewBox="0 0 19.5 19.5"><rect x="0" y="0" width="19.5" height="19.5" fill="#f0a030"/><path d="M10.5,4 L4.5,4 L4.5,15.5 L10.5,15.5" stroke="#fff" stroke-width="1.2" fill="none" stroke-dasharray="1.5 0.8"/><path d="M8,9.75 L15.5,9.75 M12.8,7 L15.5,9.75 L12.8,12.5" stroke="#fff" stroke-width="1.4" fill="none"/></svg>
<div class="t" style="top:433.38px;font-size:14.2px;line-height:14.2px;color:#3a3a3a;letter-spacing:0.2px;left:483.40px;">Exit</div>
<svg class="r" style="left:460.50px;top:455.50px;" width="17" height="14" viewBox="0 0 17 14"><path d="M0.5,7 L15.5,7 M9.5,1 L15.5,7 L9.5,13" stroke="#333" stroke-width="1.5" fill="none" stroke-linejoin="round"/></svg>
<div class="t" style="top:455.98px;font-size:14.2px;line-height:14.2px;color:#3a3a3a;letter-spacing:0.08px;left:483.40px;">Storyboard Entry Poi...</div>
<div class="r" style="left:422.30px;top:1117.90px;width:237.70px;height:27.80px;background:#efefef;border:1px solid #dedede;box-sizing:border-box;border-radius:8px;"></div>
<svg class="r" style="left:428.50px;top:1123.50px;" width="17" height="17" viewBox="0 0 17 17"><circle cx="8.5" cy="8.5" r="7.5" fill="none" stroke="#333" stroke-width="1.4"/><path d="M4.8,6.2 L12.2,6.2 M6,8.7 L11,8.7 M7.5,11.2 L9.5,11.2" stroke="#333" stroke-width="1.4"/></svg>
<div class="t" style="top:1125.02px;font-size:13.8px;line-height:13.8px;color:#a8a8a8;letter-spacing:0.2px;left:450.80px;">Filter</div>
<div class="r" style="left:810.50px;top:184.10px;width:395.50px;height:29.20px;background:#fff;border:1.5px solid #777;box-sizing:border-box;border-radius:3.5px;"></div>
<svg class="r" style="left:966.80px;top:191.70px;" width="15" height="15" viewBox="0 0 15 15"><circle cx="7.5" cy="7.5" r="7.3" fill="#fbb614"/><rect x="4.2" y="4.2" width="6.6" height="6.6" rx="0.8" fill="#fff"/></svg>
<svg class="r" style="left:1002.00px;top:191.50px;" width="14.5" height="15.5" viewBox="0 0 14.5 15.5"><path d="M7.25,0.5 L14,3.8 L14,11.7 L7.25,15 L0.5,11.7 L0.5,3.8 Z" fill="#f0a030"/><path d="M0.5,3.8 L7.25,7.1 L14,3.8 M7.25,7.1 L7.25,15" stroke="#fff" stroke-width="0.7" fill="none"/></svg>
<svg class="r" style="left:1036.40px;top:191.70px;" width="15.7" height="15" viewBox="0 0 15.7 15"><rect x="0" y="0" width="15.7" height="15" fill="#f0a030"/><path d="M8.5,3 L3.5,3 L3.5,12 L8.5,12" stroke="#fff" stroke-width="1" fill="none" stroke-dasharray="1.2 0.6"/><path d="M6.5,7.5 L12.5,7.5 M10.3,5.3 L12.5,7.5 L10.3,9.7" stroke="#fff" stroke-width="1.1" fill="none"/></svg>
<div class="r" style="left:811.00px;top:225.00px;width:394.40px;height:850.00px;background:#fff;border:1.6px solid #333;box-sizing:border-box;border-radius:47px;"></div>
<svg class="r" style="left:897.00px;top:224.00px;" width="224" height="34" viewBox="0 0 224 34"><path d="M0,1.2 Q2.6,1.2 2.6,4 L2.6,9.5 Q2.6,32.7 25.5,32.7 L198.5,32.7 Q221.4,32.7 221.4,9.5 L221.4,4 Q221.4,1.2 224,1.2 L224,1 L0,1 Z" fill="#000"/></svg>
<div class="r" style="left:957.30px;top:299.50px;width:102.90px;height:94.20px;background:#b8cce5;border:1.5px solid #c9c9c9;box-sizing:border-box;"></div>
<div class="t" style="top:340.66px;font-size:12.8px;line-height:12.8px;color:#fff;font-weight:700;letter-spacing:0.1px;left:708.70px;width:600px;text-align:center;">AppLogo</div>
<div class="r" style="left:831.40px;top:466.30px;width:354.00px;height:31.90px;background:#fff;border:1px solid #eaeaea;box-sizing:border-box;border-radius:5px;"></div>
<div class="r" style="left:831.40px;top:517.70px;width:354.00px;height:31.50px;background:#fff;border:1px solid #eaeaea;box-sizing:border-box;border-radius:5px;"></div>
<div class="r" style="left:827.20px;top:590.40px;width:8.80px;height:8.80px;background:#fff;border:1.6px solid #555;box-sizing:border-box;"></div>
<div class="r" style="left:827.20px;top:604.60px;width:8.80px;height:8.80px;background:#fff;border:1.6px solid #555;box-sizing:border-box;"></div>
<div class="r" style="left:827.20px;top:618.70px;width:8.80px;height:8.80px;background:#fff;border:1.6px solid #555;box-sizing:border-box;"></div>
<div class="r" style="left:1003.90px;top:590.40px;width:8.80px;height:8.80px;background:#fff;border:1.6px solid #555;box-sizing:border-box;"></div>
<div class="r" style="left:1003.90px;top:618.70px;width:8.80px;height:8.80px;background:#fff;border:1.6px solid #555;box-sizing:border-box;"></div>
<div class="r" style="left:1180.70px;top:590.40px;width:8.80px;height:8.80px;background:#fff;border:1.6px solid #555;box-sizing:border-box;"></div>
<div class="r" style="left:1180.70px;top:604.60px;width:8.80px;height:8.80px;background:#fff;border:1.6px solid #555;box-sizing:border-box;"></div>
<div class="r" style="left:1180.70px;top:618.70px;width:8.80px;height:8.80px;background:#fff;border:1.6px solid #555;box-sizing:border-box;"></div>
<div class="t" style="top:601.45px;font-size:14px;line-height:14px;color:#3a86f5;letter-spacing:0.1px;left:708.40px;width:600px;text-align:center;-webkit-text-stroke-width:0;">Button</div>
<div class="r" style="left:938.10px;top:1062.70px;width:140.20px;height:5.30px;background:#000;border-radius:3px;"></div>
<svg class="r" style="left:712.00px;top:633.00px;" width="100" height="34" viewBox="0 0 100 34"><defs><linearGradient id="ag" x1="0" x2="1"><stop offset="0" stop-color="#888" stop-opacity="0"/><stop offset="0.5" stop-color="#888" stop-opacity="1"/></linearGradient></defs><rect x="3" y="16" width="94" height="2.2" fill="url(#ag)"/><path d="M80,2 L96,17 L80,32" stroke="#888" stroke-width="2" fill="none"/></svg>
<div class="r" style="left:1352.30px;top:193.50px;width:141.20px;height:256.80px;background:#dedede;border:1px solid #b8b8b8;box-sizing:border-box;border-radius:8px;box-shadow:0 2px 14px rgba(0,0,0,0.16);"></div>
<div class="r" style="left:1353.00px;top:199.00px;width:140.00px;height:1.00px;background:#c8c8c8;"></div>
<div class="r" style="left:1353.00px;top:435.00px;width:140.00px;height:1.00px;background:#c8c8c8;"></div>
<div class="r" style="left:1353.00px;top:436.00px;width:140.00px;height:13.50px;background:#d5d5d5;border-radius:0 0 7px 7px;"></div>
<div class="r" style="left:1371.80px;top:214.20px;width:97.80px;height:212.00px;background:#fff;border-radius:9px;"></div>
<div class="r" style="left:1392.90px;top:213.80px;width:55.60px;height:8.30px;background:#000;border-radius:0 0 6px 6px;"></div>
<div class="r" style="left:1407.90px;top:232.20px;width:26.00px;height:23.90px;background:#b8cce5;"></div>
<div class="r" style="left:1376.60px;top:274.00px;width:88.40px;height:8.00px;background:#fff;border:0.5px solid #f4f4f4;box-sizing:border-box;border-radius:1.5px;"></div>
<div class="r" style="left:1376.60px;top:286.00px;width:88.40px;height:8.30px;background:#fff;border:0.5px solid #f4f4f4;box-sizing:border-box;border-radius:1.5px;"></div>
<div class="t" style="top:307.44px;font-size:4.2px;line-height:4.2px;color:#3a85f0;left:1120.50px;width:600px;text-align:center;">Button</div>
<div class="t" style="top:242.78px;font-size:3.8px;line-height:3.8px;color:#fff;font-weight:700;left:1120.90px;width:600px;text-align:center;">AppLogo</div>
<svg class="r" style="left:680.00px;top:1122.00px;" width="17" height="17" viewBox="0 0 17 17"><rect x="1" y="1" width="15" height="15" rx="2.5" fill="none" stroke="#6e6e6e" stroke-width="1.3"/><rect x="3" y="3" width="3.5" height="11" fill="#6e6e6e"/></svg>
<svg class="r" style="left:709.40px;top:1121.50px;" width="18" height="18" viewBox="0 0 18 18"><circle cx="9" cy="9" r="8" fill="none" stroke="#6e6e6e" stroke-width="1.3"/><circle cx="9" cy="4.8" r="1.2" fill="#6e6e6e"/><path d="M5,7 L13,7 M9,7 L9,10.5 L7,14 M9,10.5 L11,14" stroke="#6e6e6e" stroke-width="1.3" fill="none"/></svg>
<svg class="r" style="left:741.80px;top:1121.50px;" width="18" height="18" viewBox="0 0 18 18"><circle cx="9" cy="9" r="8" fill="none" stroke="#6e6e6e" stroke-width="1.3"/><path d="M9,1 A8,8 0 0,0 9,17 Z" fill="#6e6e6e"/><circle cx="9" cy="9" r="3.5" fill="#6e6e6e"/></svg>
<svg class="r" style="left:775.00px;top:1118.50px;" width="19" height="20" viewBox="0 0 19 20"><rect x="1" y="7" width="11" height="11" rx="1.2" fill="none" stroke="#6e6e6e" stroke-width="1.3"/><path d="M13,2.5 Q17,3 17,8" stroke="#6e6e6e" stroke-width="1.2" fill="none"/><path d="M11.5,1 L13.5,2.5 L11.5,4.5" stroke="#6e6e6e" stroke-width="1.2" fill="none"/></svg>
<svg class="r" style="left:808.90px;top:1122.00px;" width="17" height="17" viewBox="0 0 17 17"><rect x="1" y="1" width="15" height="15" rx="1.5" fill="none" stroke="#c5c5c5" stroke-width="1.2"/><path d="M8.5,1 L8.5,16" stroke="#c5c5c5" stroke-width="1.2"/></svg>
<svg class="r" style="left:845.00px;top:1121.50px;" width="12.5" height="19" viewBox="0 0 12.5 19"><rect x="1" y="1" width="10.5" height="17" rx="2" fill="none" stroke="#6e6e6e" stroke-width="1.3"/><path d="M4.5,15.5 L8,15.5" stroke="#6e6e6e" stroke-width="1"/></svg>
<div class="t" style="top:1123.78px;font-size:14.2px;line-height:14.2px;color:#5e5e5e;letter-spacing:-0.1px;left:875.60px;">iPhone 11</div>
<svg class="r" style="left:1041.50px;top:1120.00px;" width="19.5" height="19.5" viewBox="0 0 19.5 19.5"><circle cx="7.5" cy="7.5" r="6.3" fill="none" stroke="#6e6e6e" stroke-width="1.4"/><path d="M12,12 L18,18" stroke="#6e6e6e" stroke-width="1.6" stroke-linecap="round"/><path d="M4.5,7.5 L10.5,7.5" stroke="#6e6e6e" stroke-width="1.3"/></svg>
<div class="t" style="top:1123.28px;font-size:14.2px;line-height:14.2px;color:#5e5e5e;letter-spacing:0.2px;left:1079.90px;">75%</div>
<svg class="r" style="left:1126.20px;top:1120.00px;" width="19.5" height="19.5" viewBox="0 0 19.5 19.5"><circle cx="7.5" cy="7.5" r="6.3" fill="none" stroke="#6e6e6e" stroke-width="1.4"/><path d="M12,12 L18,18" stroke="#6e6e6e" stroke-width="1.6" stroke-linecap="round"/><path d="M4.5,7.5 L10.5,7.5 M7.5,4.5 L7.5,10.5" stroke="#6e6e6e" stroke-width="1.3"/></svg>
<svg class="r" style="left:1351.50px;top:1120.00px;" width="21" height="20" viewBox="0 0 21 20"><path d="M1,5 L1,1 L5,1 M16,1 L20,1 L20,5 M20,15 L20,19 L16,19 M5,19 L1,19 L1,15" stroke="#6e6e6e" stroke-width="1.3" fill="none"/><path d="M6.5,10 A4,4 0 0,1 14,8 M14.5,10 A4,4 0 0,1 7,12" stroke="#6e6e6e" stroke-width="1.3" fill="none"/><path d="M13,5.5 L14.2,8.2 L11.5,8.5 M8,14.5 L6.8,11.8 L9.5,11.5" stroke="#6e6e6e" stroke-width="1.1" fill="none"/></svg>
<svg class="r" style="left:1384.30px;top:1120.00px;" width="20" height="20" viewBox="0 0 20 20"><path d="M1,1 L1,19" stroke="#6e6e6e" stroke-width="1.4"/><rect x="4" y="3" width="10" height="5.5" fill="none" stroke="#6e6e6e" stroke-width="1.3"/><rect x="4" y="11.5" width="15" height="5.5" fill="none" stroke="#6e6e6e" stroke-width="1.3"/></svg>
<svg class="r" style="left:1417.50px;top:1119.50px;" width="20" height="21" viewBox="0 0 20 21"><rect x="6" y="6.5" width="8" height="8" fill="none" stroke="#6e6e6e" stroke-width="1.3"/><path d="M10,1 L10,6.5 M10,14.5 L10,20 M7.5,1 L12.5,1 M7.5,20 L12.5,20 M1,10.5 L6,10.5 M14,10.5 L19,10.5 M1,8 L1,13 M19,8 L19,13" stroke="#6e6e6e" stroke-width="1.2" fill="none"/></svg>
<svg class="r" style="left:1450.00px;top:1120.50px;" width="21" height="18" viewBox="0 0 21 18"><path d="M10.5,2.5 L16,13.5 L5,13.5 Z" fill="none" stroke="#6e6e6e" stroke-width="1.3" stroke-linejoin="round"/><circle cx="10.5" cy="10" r="1.5" fill="#6e6e6e"/><path d="M1,8.5 L5,8.5 M16,8.5 L20,8.5 M1,6 L1,11 M20,6 L20,11" stroke="#6e6e6e" stroke-width="1.2"/></svg>
<svg class="r" style="left:1486.30px;top:1119.50px;" width="19.5" height="21" viewBox="0 0 19.5 21"><path d="M6,3.5 L1,3.5 L1,20 L18.5,20 L18.5,3.5 L13.5,3.5" stroke="#6e6e6e" stroke-width="1.4" fill="none"/><path d="M9.75,1 L9.75,12.5 M5.5,8.5 L9.75,12.7 L14,8.5" stroke="#6e6e6e" stroke-width="1.4" fill="none"/></svg>
<svg class="r" style="left:430.00px;top:1161.50px;" width="19.5" height="12" viewBox="0 0 19.5 12"><path d="M0,2.5 Q0,0 2.5,0 L15,0 L19.5,6 L15,12 L2.5,12 Q0,12 0,9.5 Z" fill="#1a7ff5"/></svg>
<div class="r" style="left:459.00px;top:1160.00px;width:1.00px;height:15.00px;background:#dadada;"></div>
<svg class="r" style="left:472.00px;top:1158.50px;" width="14" height="18" viewBox="0 0 14 18"><rect x="1" y="1" width="3.5" height="16" rx="1.7" fill="none" stroke="#6e6e6e" stroke-width="1.4"/><rect x="9.5" y="1" width="3.5" height="16" rx="1.7" fill="none" stroke="#6e6e6e" stroke-width="1.4"/></svg>
<svg class="r" style="left:508.50px;top:1159.00px;" width="17.5" height="17" viewBox="0 0 17.5 17"><path d="M1,10 L8,3.5 L15.5,10.5 M15.5,6.5 L15.5,10.5 L11.5,10.5" stroke="#b5b5b5" stroke-width="1.3" fill="none"/><rect x="3.5" y="13" width="10" height="3.5" rx="0.8" fill="none" stroke="#b5b5b5" stroke-width="1.2"/></svg>
<svg class="r" style="left:548.50px;top:1158.50px;" width="12.5" height="18" viewBox="0 0 12.5 18"><path d="M6.25,1 L6.25,11 M2,7 L6.25,11.2 L10.5,7" stroke="#b5b5b5" stroke-width="1.3" fill="none"/><rect x="1" y="13.5" width="10.5" height="3.5" rx="0.8" fill="none" stroke="#b5b5b5" stroke-width="1.2"/></svg>
<svg class="r" style="left:586.50px;top:1158.50px;" width="12.5" height="18" viewBox="0 0 12.5 18"><path d="M6.25,11 L6.25,1 M2,5 L6.25,0.8 L10.5,5" stroke="#b5b5b5" stroke-width="1.3" fill="none"/><rect x="1" y="13.5" width="10.5" height="3.5" rx="0.8" fill="none" stroke="#b5b5b5" stroke-width="1.2"/></svg>
<div class="r" style="left:612.50px;top:1160.00px;width:1.00px;height:15.00px;background:#dadada;"></div>
<svg class="r" style="left:623.50px;top:1158.50px;" width="17" height="18" viewBox="0 0 17 18"><path d="M1.5,5.5 L9.5,3 L9.5,14.5 L1.5,17 Z" fill="#fbfbfb" stroke="#6e6e6e" stroke-width="1.2" stroke-linejoin="round"/><path d="M4.5,5.5 L12.5,3 L12.5,14.5 L4.5,17 Z" fill="#fbfbfb" stroke="#6e6e6e" stroke-width="1.2" stroke-linejoin="round"/><path d="M7.5,5.5 L15.5,3 L15.5,14.5 L7.5,17 Z" fill="#fbfbfb" stroke="#6e6e6e" stroke-width="1.2" stroke-linejoin="round"/></svg>
<svg class="r" style="left:661.50px;top:1158.50px;" width="17" height="18" viewBox="0 0 17 18"><circle cx="3.5" cy="3.5" r="2.6" fill="none" stroke="#6e6e6e" stroke-width="1.3"/><circle cx="3.5" cy="14.5" r="2.6" fill="none" stroke="#6e6e6e" stroke-width="1.3"/><circle cx="13.5" cy="9" r="2.6" fill="none" stroke="#6e6e6e" stroke-width="1.3"/><path d="M5.8,4.8 L11,8 M5.8,13.2 L11,10" stroke="#6e6e6e" stroke-width="1.3"/></svg>
<svg class="r" style="left:700.50px;top:1158.50px;" width="15" height="18" viewBox="0 0 15 18"><rect x="1" y="1" width="13" height="7" rx="3.5" fill="none" stroke="#6e6e6e" stroke-width="1.3"/><circle cx="4.5" cy="4.5" r="2" fill="#6e6e6e"/><rect x="1" y="10" width="13" height="7" rx="3.5" fill="none" stroke="#6e6e6e" stroke-width="1.3"/><circle cx="10.5" cy="13.5" r="2" fill="#6e6e6e"/></svg>
<svg class="r" style="left:737.50px;top:1158.50px;" width="17" height="18" viewBox="0 0 17 18"><path d="M1,8 L16,1 L9.5,17 L8,10 Z" stroke="#6e6e6e" stroke-width="1.3" fill="none" stroke-linejoin="round"/></svg>
<div class="r" style="left:765.00px;top:1160.00px;width:1.00px;height:15.00px;background:#dadada;"></div>
<svg class="r" style="left:775.30px;top:1156.50px;" width="19.5" height="20" viewBox="0 0 19.5 20"><rect x="0.5" y="0.5" width="18.5" height="19" rx="3.5" fill="#e4e4e4"/><g fill="none" stroke="#b4b4b4" stroke-width="0.9"><path d="M5,2 L5,18 M9.75,2 L9.75,18 M14.5,2 L14.5,18 M2,5.5 L17.5,5.5 M2,10 L17.5,10 M2,14.5 L17.5,14.5"/><circle cx="9.75" cy="10" r="3.5"/><circle cx="9.75" cy="10" r="6.5"/></g></svg>
<div class="t" style="top:1160.48px;font-size:14.2px;line-height:14.2px;color:#2e2e2e;letter-spacing:0.05px;left:800.30px;">GuardDemo</div>
<svg class="r" style="left:1487.00px;top:1159.50px;" width="17" height="17" viewBox="0 0 17 17"><rect x="1" y="1" width="15" height="15" rx="3" fill="none" stroke="#6e6e6e" stroke-width="1.3"/><rect x="3.5" y="10" width="10" height="3.5" fill="#6e6e6e"/></svg>
<svg class="r" style="left:1806.00px;top:62.00px;" width="24.5" height="19" viewBox="0 0 24.5 19"><rect x="1" y="1" width="22.5" height="17" rx="3" fill="none" stroke="#6e6e6e" stroke-width="1.6"/><path d="M16.5,1 L16.5,18" stroke="#6e6e6e" stroke-width="1.6"/><path d="M18.3,5 L21.8,5 M18.3,7.6 L21.8,7.6 M18.3,10.2 L21.8,10.2" stroke="#6e6e6e" stroke-width="1.2"/></svg>
<svg class="r" style="left:1564.50px;top:105.50px;" width="14.5" height="17" viewBox="0 0 14.5 17"><path d="M1,2 Q1,1 2,1 L8.5,1 L13.5,6 L13.5,15 Q13.5,16 12.5,16 L2,16 Q1,16 1,15 Z M8.5,1 L8.5,6 L13.5,6" stroke="#6e6e6e" stroke-width="1.3" fill="none" stroke-linejoin="round"/></svg>
<svg class="r" style="left:1600.50px;top:105.50px;" width="17" height="17" viewBox="0 0 17 17"><circle cx="8.5" cy="8.5" r="7.6" fill="none" stroke="#6e6e6e" stroke-width="1.3"/><path d="M8.5,4 L8.5,8.5 L5,8.5" stroke="#6e6e6e" stroke-width="1.3" fill="none"/></svg>
<svg class="r" style="left:1638.30px;top:105.50px;" width="17" height="17" viewBox="0 0 17 17"><circle cx="8.5" cy="8.5" r="7.6" fill="none" stroke="#6e6e6e" stroke-width="1.3"/><path d="M6,6.5 Q6,4 8.5,4 Q11,4 11,6.3 Q11,7.8 9.2,8.6 Q8.5,9 8.5,10.3" stroke="#6e6e6e" stroke-width="1.3" fill="none"/><circle cx="8.5" cy="12.6" r="0.9" fill="#6e6e6e"/></svg>
<svg class="r" style="left:1676.00px;top:107.00px;" width="17.5" height="14.5" viewBox="0 0 17.5 14.5"><rect x="0" y="0" width="17.5" height="14.5" rx="2" fill="#1a7ff5"/><rect x="2.5" y="3" width="6.5" height="6" fill="#fff"/><path d="M10.5,3.5 L15,3.5 M10.5,6 L15,6 M10.5,8.5 L15,8.5 M2.5,11.5 L15,11.5" stroke="#fff" stroke-width="1.2"/></svg>
<svg class="r" style="left:1714.00px;top:105.50px;" width="17.5" height="17" viewBox="0 0 17.5 17"><g stroke="#6e6e6e" stroke-width="1.3" fill="none"><path d="M0.5,2.7 L17,2.7 M0.5,8.5 L17,8.5 M0.5,14.3 L17,14.3"/></g><g fill="#f3eeee" stroke="#6e6e6e" stroke-width="1.2"><circle cx="12.5" cy="2.7" r="1.7"/><circle cx="4" cy="8.5" r="1.7"/><circle cx="12.5" cy="14.3" r="1.7"/></g></svg>
<svg class="r" style="left:1751.30px;top:105.80px;" width="17" height="17" viewBox="0 0 17 17"><path d="M1,1 L16,15.5 L1,15.5 Z" stroke="#6e6e6e" stroke-width="1.4" fill="none" stroke-linejoin="round"/><path d="M4,8.5 L9,13 L4,13 Z" stroke="#6e6e6e" stroke-width="1.1" fill="none"/></svg>
<svg class="r" style="left:1789.50px;top:105.50px;" width="17.5" height="17" viewBox="0 0 17.5 17"><path d="M12.5,3.3 A6.8,6.8 0 1,0 12.5,13.7" stroke="#6e6e6e" stroke-width="1.4" fill="none"/><circle cx="8" cy="8.5" r="2.8" fill="#6e6e6e"/><path d="M8,8.5 L17,8.5" stroke="#6e6e6e" stroke-width="1.4"/></svg>
<div class="t" style="top:140.30px;font-size:15px;line-height:15px;color:#737171;font-weight:700;letter-spacing:0.3px;left:1529.80px;">Custom Class</div>
<div class="r" style="left:1571.00px;top:168.30px;width:273.00px;height:57.10px;border:3px solid #fd2a16;box-sizing:border-box;"></div>
<div class="t" style="top:175.54px;font-size:13.3px;line-height:13.3px;color:#2a2a2a;letter-spacing:0.1px;right:299.20px;">Class</div>
<div class="t" style="top:203.64px;font-size:13.3px;line-height:13.3px;color:#2a2a2a;letter-spacing:0.1px;right:299.20px;">Module</div>
<div class="r" style="left:1627.90px;top:171.30px;width:211.70px;height:19.70px;background:#fff;border-radius:5px;box-shadow:0 0.5px 1.5px rgba(0,0,0,0.3);"></div>
<div class="t" style="top:174.45px;font-size:14px;line-height:14px;color:#111;letter-spacing:0.4px;left:1632.60px;">LoginButton</div>
<svg class="r" style="left:1801.50px;top:174.00px;" width="13.5" height="13.5" viewBox="0 0 13.5 13.5"><circle cx="6.75" cy="6.75" r="6.5" fill="#7d7d7d"/><path d="M3.3,6.75 L10,6.75 M7.2,4 L10,6.75 L7.2,9.5" stroke="#fff" stroke-width="1.3" fill="none"/></svg>
<svg class="r" style="left:1822.50px;top:173.00px;" width="15.3" height="14.5" viewBox="0 0 15.3 14.5"><rect x="0" y="0" width="15.3" height="14.5" rx="3.5" fill="#1a7ff5"/><path d="M4.8,5.8 L7.65,8.6 L10.5,5.8" stroke="#fff" stroke-width="1.4" fill="none"/></svg>
<div class="r" style="left:1624.00px;top:194.30px;width:217.00px;height:27.20px;background:#84a9ee;border-radius:7px;"></div>
<div class="r" style="left:1627.50px;top:198.50px;width:211.50px;height:19.20px;background:#fff;border-radius:4px;"></div>
<div class="t" style="top:201.65px;font-size:14px;line-height:14px;color:#111;letter-spacing:0.1px;left:1632.10px;">Guard</div>
<div class="r" style="left:1670.80px;top:200.40px;width:1.20px;height:16.80px;background:#000;"></div>
<svg class="r" style="left:1822.50px;top:200.60px;" width="15.3" height="14.8" viewBox="0 0 15.3 14.8"><rect x="0" y="0" width="15.3" height="14.8" rx="3.5" fill="#1a7ff5"/><path d="M4.8,6 L7.65,8.8 L10.5,6" stroke="#fff" stroke-width="1.4" fill="none"/></svg>
<div class="r" style="left:1627.20px;top:228.00px;width:14.60px;height:14.60px;background:#fff;border-radius:3px;box-shadow:0 0 0 0.6px rgba(0,0,0,0.18), 0 0.5px 1px rgba(0,0,0,0.15);"></div>
<div class="t" style="top:227.95px;font-size:14.0px;line-height:14.0px;color:#2a2a2a;letter-spacing:0.4px;left:1647.60px;">Inherit Module From Target</div>
<div class="r" style="left:1530.70px;top:261.70px;width:308.30px;height:1.60px;background:#e4dfdf;"></div>
<div class="t" style="top:272.10px;font-size:15px;line-height:15px;color:#737171;font-weight:700;letter-spacing:0.3px;left:1530.00px;">Identity</div>
<div class="t" style="top:307.94px;font-size:13.3px;line-height:13.3px;color:#2a2a2a;letter-spacing:0.1px;right:299.20px;">Restoration ID</div>
<div class="r" style="left:1627.90px;top:303.80px;width:211.10px;height:20.50px;background:#fff;box-shadow:0 0.6px 1px rgba(0,0,0,0.2);"></div>
<div class="r" style="left:1530.70px;top:340.20px;width:308.30px;height:1.60px;background:#e4dfdf;"></div>
<div class="t" style="top:350.30px;font-size:15px;line-height:15px;color:#737171;font-weight:700;letter-spacing:0.45px;left:1530.00px;">User Defined Runtime Attributes</div>
<div class="r" style="left:1531.10px;top:374.50px;width:307.40px;height:121.90px;background:#fff;border:1px solid #c6c6c6;box-sizing:border-box;"></div>
<div class="r" style="left:1532.00px;top:409.90px;width:306.00px;height:1.00px;background:#e3e3e3;"></div>
<div class="t" style="top:385.95px;font-size:14.0px;line-height:14.0px;color:#2a2a2a;letter-spacing:0.4px;left:1542.10px;">Key Path</div>
<div class="r" style="left:1698.00px;top:383.40px;width:1.00px;height:19.00px;background:#e0e0e0;"></div>
<div class="t" style="top:385.95px;font-size:14.0px;line-height:14.0px;color:#2a2a2a;letter-spacing:0.4px;left:1703.80px;">Type</div>
<div class="r" style="left:1784.00px;top:383.40px;width:1.00px;height:19.00px;background:#e0e0e0;"></div>
<div class="t" style="top:385.95px;font-size:14.0px;line-height:14.0px;color:#2a2a2a;letter-spacing:0.4px;left:1789.70px;">Val...</div>
<svg class="r" style="left:1538.00px;top:479.00px;" width="14" height="13" viewBox="0 0 14 13"><path d="M7,0 L7,13 M0.5,6.5 L13.5,6.5" stroke="#555" stroke-width="1.3"/></svg>
<div class="r" style="left:1563.80px;top:484.80px;width:12.70px;height:1.20px;background:#c4c4c4;"></div>
<div class="r" style="left:1530.70px;top:506.70px;width:308.30px;height:1.60px;background:#e4dfdf;"></div>
<div class="t" style="top:517.00px;font-size:15px;line-height:15px;color:#737171;font-weight:700;letter-spacing:0.3px;left:1530.00px;">Document</div>
<div class="t" style="top:552.54px;font-size:13.3px;line-height:13.3px;color:#2a2a2a;letter-spacing:0.1px;right:299.20px;">Label</div>
<div class="r" style="left:1627.90px;top:548.60px;width:211.10px;height:20.60px;background:#fff;box-shadow:0 0.6px 1px rgba(0,0,0,0.2);"></div>
<div class="t" style="top:552.05px;font-size:14.0px;line-height:14.0px;color:#bfbfbf;letter-spacing:0.4px;left:1632.10px;">Xcode Specific Label</div>
<svg class="r" style="left:1630.70px;top:582.00px;" width="10" height="9" viewBox="0 0 10 9"><path d="M1,0.8 L9,8.2 M9,0.8 L1,8.2" stroke="#333" stroke-width="1.5"/></svg>
<div class="r" style="left:1650.70px;top:580.70px;width:10.30px;height:9.50px;background:#f28a73;border-radius:1.5px;box-shadow:0 0.5px 1px rgba(0,0,0,0.2);"></div>
<div class="r" style="left:1673.45px;top:580.70px;width:10.30px;height:9.50px;background:#f4b56d;border-radius:1.5px;box-shadow:0 0.5px 1px rgba(0,0,0,0.2);"></div>
<div class="r" style="left:1696.20px;top:580.70px;width:10.30px;height:9.50px;background:#f7d77c;border-radius:1.5px;box-shadow:0 0.5px 1px rgba(0,0,0,0.2);"></div>
<div class="r" style="left:1718.95px;top:580.70px;width:10.30px;height:9.50px;background:#c3dd87;border-radius:1.5px;box-shadow:0 0.5px 1px rgba(0,0,0,0.2);"></div>
<div class="r" style="left:1741.70px;top:580.70px;width:10.30px;height:9.50px;background:#87b8f4;border-radius:1.5px;box-shadow:0 0.5px 1px rgba(0,0,0,0.2);"></div>
<div class="r" style="left:1764.45px;top:580.70px;width:10.30px;height:9.50px;background:#d3aaec;border-radius:1.5px;box-shadow:0 0.5px 1px rgba(0,0,0,0.2);"></div>
<div class="r" style="left:1787.20px;top:580.70px;width:10.30px;height:9.50px;background:#cdcdcd;border-radius:1.5px;box-shadow:0 0.5px 1px rgba(0,0,0,0.2);"></div>
<div class="t" style="top:605.34px;font-size:13.3px;line-height:13.3px;color:#2a2a2a;letter-spacing:0.1px;right:299.20px;">Object ID</div>
<div class="t" style="top:604.75px;font-size:14.0px;line-height:14.0px;color:#2a2a2a;letter-spacing:0.47px;left:1630.00px;">OIs-6I-Nup</div>
<div class="t" style="top:630.34px;font-size:13.3px;line-height:13.3px;color:#2a2a2a;letter-spacing:0.1px;right:299.20px;">Lock</div>
<div class="r" style="left:1628.10px;top:627.60px;width:211.50px;height:19.50px;background:#fff;border-radius:5px;box-shadow:0 0.5px 1.5px rgba(0,0,0,0.3);"></div>
<div class="t" style="top:629.75px;font-size:14.0px;line-height:14.0px;color:#111;letter-spacing:0.5px;left:1635.80px;">Inherited - (Nothing)</div>
<svg class="r" style="left:1822.50px;top:629.40px;" width="15.3" height="15.5" viewBox="0 0 15.3 15.5"><rect x="0" y="0" width="15.3" height="15.5" rx="3.5" fill="#1a7ff5"/><path d="M4.8,6 L7.65,3.4 L10.5,6 M4.8,9.5 L7.65,12.1 L10.5,9.5" stroke="#fff" stroke-width="1.3" fill="none"/></svg>
<div class="t" style="top:660.04px;font-size:13.3px;line-height:13.3px;color:#2a2a2a;letter-spacing:0.1px;right:299.20px;">Localizer Hint</div>
<div class="r" style="left:1627.90px;top:655.80px;width:211.10px;height:20.40px;background:#fff;box-shadow:0 0.6px 1px rgba(0,0,0,0.2);"></div>
<div class="t" style="top:659.05px;font-size:14.0px;line-height:14.0px;color:#bfbfbf;letter-spacing:0.4px;left:1632.10px;">Comment For Localizer</div>
<div class="r" style="left:1530.40px;top:691.80px;width:308.60px;height:1.60px;background:#e4dfdf;"></div>
<div class="t" style="top:702.30px;font-size:15px;line-height:15px;color:#737171;font-weight:700;letter-spacing:0.3px;left:1530.00px;">Accessibility</div>
<div class="t" style="top:734.24px;font-size:13.3px;line-height:13.3px;color:#2a2a2a;letter-spacing:0.1px;right:299.20px;">Accessibility</div>
<svg class="r" style="left:1628.10px;top:733.10px;" width="14.6" height="14.6" viewBox="0 0 14.6 14.6"><rect x="0" y="0" width="14.6" height="14.6" rx="3" fill="#1a7ff5"/><path d="M3.5,7.5 L6.2,10.5 L11,3.8" stroke="#fff" stroke-width="1.8" fill="none" stroke-linecap="round" stroke-linejoin="round"/></svg>
<div class="t" style="top:733.65px;font-size:14.0px;line-height:14.0px;color:#2a2a2a;letter-spacing:0.4px;left:1648.50px;">Enabled</div>
<div class="t" style="top:760.74px;font-size:13.3px;line-height:13.3px;color:#2a2a2a;letter-spacing:0.1px;right:299.20px;">Label</div>
<div class="r" style="left:1627.90px;top:756.80px;width:211.10px;height:20.10px;background:#fff;box-shadow:0 0.6px 1px rgba(0,0,0,0.2);"></div>
<div class="t" style="top:759.75px;font-size:14.0px;line-height:14.0px;color:#bfbfbf;letter-spacing:0.4px;left:1632.10px;">Label</div>
<div class="t" style="top:789.84px;font-size:13.3px;line-height:13.3px;color:#2a2a2a;letter-spacing:0.1px;right:299.20px;">Hint</div>
<div class="r" style="left:1627.90px;top:786.00px;width:211.10px;height:20.00px;background:#fff;box-shadow:0 0.6px 1px rgba(0,0,0,0.2);"></div>
<div class="t" style="top:788.85px;font-size:14.0px;line-height:14.0px;color:#bfbfbf;letter-spacing:0.4px;left:1632.10px;">Hint</div>
<div class="t" style="top:819.04px;font-size:13.3px;line-height:13.3px;color:#2a2a2a;letter-spacing:0.1px;right:299.20px;">Identifier</div>
<div class="r" style="left:1627.90px;top:814.80px;width:211.10px;height:20.40px;background:#fff;box-shadow:0 0.6px 1px rgba(0,0,0,0.2);"></div>
<div class="t" style="top:818.05px;font-size:14.0px;line-height:14.0px;color:#bfbfbf;letter-spacing:0.4px;left:1632.10px;">Identifier</div>
<div class="r" style="left:1530.40px;top:841.00px;width:308.60px;height:1.60px;background:#e4dfdf;"></div>
<div class="t" style="top:850.54px;font-size:13.3px;line-height:13.3px;color:#2a2a2a;letter-spacing:0.1px;right:299.20px;">Traits</div>
<svg class="r" style="left:1628.10px;top:849.40px;" width="14.6" height="14.6" viewBox="0 0 14.6 14.6"><rect x="0" y="0" width="14.6" height="14.6" rx="3" fill="#1a7ff5"/><path d="M3.5,7.5 L6.2,10.5 L11,3.8" stroke="#fff" stroke-width="1.8" fill="none" stroke-linecap="round" stroke-linejoin="round"/></svg>
<div class="t" style="top:849.95px;font-size:14.0px;line-height:14.0px;color:#2a2a2a;letter-spacing:0.4px;left:1648.50px;">Button</div>
<div class="r" style="left:1628.10px;top:872.15px;width:14.60px;height:14.60px;background:#fff;border-radius:3px;box-shadow:0 0 0 0.6px rgba(0,0,0,0.18), 0 0.5px 1px rgba(0,0,0,0.15);"></div>
<div class="t" style="top:872.70px;font-size:14.0px;line-height:14.0px;color:#2a2a2a;letter-spacing:0.4px;left:1648.50px;">Image</div>
<div class="r" style="left:1628.10px;top:894.90px;width:14.60px;height:14.60px;background:#fff;border-radius:3px;box-shadow:0 0 0 0.6px rgba(0,0,0,0.18), 0 0.5px 1px rgba(0,0,0,0.15);"></div>
<div class="t" style="top:895.45px;font-size:14.0px;line-height:14.0px;color:#2a2a2a;letter-spacing:0.4px;left:1648.50px;">Static Text</div>
<div class="r" style="left:1628.10px;top:917.65px;width:14.60px;height:14.60px;background:#fff;border-radius:3px;box-shadow:0 0 0 0.6px rgba(0,0,0,0.18), 0 0.5px 1px rgba(0,0,0,0.15);"></div>
<div class="t" style="top:918.20px;font-size:14.0px;line-height:14.0px;color:#2a2a2a;letter-spacing:0.4px;left:1648.50px;">Search Field</div>
<div class="r" style="left:1628.10px;top:940.40px;width:14.60px;height:14.60px;background:#fff;border-radius:3px;box-shadow:0 0 0 0.6px rgba(0,0,0,0.18), 0 0.5px 1px rgba(0,0,0,0.15);"></div>
<div class="t" style="top:940.95px;font-size:14.0px;line-height:14.0px;color:#2a2a2a;letter-spacing:0.4px;left:1648.50px;">Plays Sound</div>
<div class="r" style="left:1628.10px;top:963.15px;width:14.60px;height:14.60px;background:#fff;border-radius:3px;box-shadow:0 0 0 0.6px rgba(0,0,0,0.18), 0 0.5px 1px rgba(0,0,0,0.15);"></div>
<div class="t" style="top:963.70px;font-size:14.0px;line-height:14.0px;color:#2a2a2a;letter-spacing:0.4px;left:1648.50px;">Keyboard Key</div>
<div class="r" style="left:1628.10px;top:985.90px;width:14.60px;height:14.60px;background:#fff;border-radius:3px;box-shadow:0 0 0 0.6px rgba(0,0,0,0.18), 0 0.5px 1px rgba(0,0,0,0.15);"></div>
<div class="t" style="top:986.45px;font-size:14.0px;line-height:14.0px;color:#2a2a2a;letter-spacing:0.4px;left:1648.50px;">Summary Element</div>
<svg class="r" style="left:1628.10px;top:1008.65px;" width="14.6" height="14.6" viewBox="0 0 14.6 14.6"><rect x="0" y="0" width="14.6" height="14.6" rx="3" fill="#1a7ff5"/><path d="M3.5,7.5 L6.2,10.5 L11,3.8" stroke="#fff" stroke-width="1.8" fill="none" stroke-linecap="round" stroke-linejoin="round"/></svg>
<div class="t" style="top:1009.20px;font-size:14.0px;line-height:14.0px;color:#2a2a2a;letter-spacing:0.4px;left:1648.50px;">User Interaction Enabled</div>
<div class="r" style="left:1628.10px;top:1031.40px;width:14.60px;height:14.60px;background:#fff;border-radius:3px;box-shadow:0 0 0 0.6px rgba(0,0,0,0.18), 0 0.5px 1px rgba(0,0,0,0.15);"></div>
<div class="t" style="top:1031.95px;font-size:14.0px;line-height:14.0px;color:#2a2a2a;letter-spacing:0.4px;left:1648.50px;">Updates Frequently</div>
<div class="r" style="left:1628.10px;top:1054.15px;width:14.60px;height:14.60px;background:#fff;border-radius:3px;box-shadow:0 0 0 0.6px rgba(0,0,0,0.18), 0 0.5px 1px rgba(0,0,0,0.15);"></div>
<div class="t" style="top:1054.70px;font-size:14.0px;line-height:14.0px;color:#2a2a2a;letter-spacing:0.4px;left:1648.50px;">Starts Media Session</div>
<div class="r" style="left:1628.10px;top:1076.90px;width:14.60px;height:14.60px;background:#fff;border-radius:3px;box-shadow:0 0 0 0.6px rgba(0,0,0,0.18), 0 0.5px 1px rgba(0,0,0,0.15);"></div>
<div class="t" style="top:1077.45px;font-size:14.0px;line-height:14.0px;color:#2a2a2a;letter-spacing:0.4px;left:1648.50px;">Adjustable</div>
<div class="r" style="left:1628.10px;top:1099.65px;width:14.60px;height:14.60px;background:#fff;border-radius:3px;box-shadow:0 0 0 0.6px rgba(0,0,0,0.18), 0 0.5px 1px rgba(0,0,0,0.15);"></div>
<div class="t" style="top:1100.20px;font-size:14.0px;line-height:14.0px;color:#2a2a2a;letter-spacing:0.4px;left:1648.50px;">Allows Direct Interaction</div>
<div class="r" style="left:1628.10px;top:1122.40px;width:14.60px;height:14.60px;background:#fff;border-radius:3px;box-shadow:0 0 0 0.6px rgba(0,0,0,0.18), 0 0.5px 1px rgba(0,0,0,0.15);"></div>
<div class="t" style="top:1122.95px;font-size:14.0px;line-height:14.0px;color:#2a2a2a;letter-spacing:0.4px;left:1648.50px;">Causes Page Turn</div>
<div class="r" style="left:1628.10px;top:1145.15px;width:14.60px;height:14.60px;background:#fff;border-radius:3px;box-shadow:0 0 0 0.6px rgba(0,0,0,0.18), 0 0.5px 1px rgba(0,0,0,0.15);"></div>
<div class="t" style="top:1145.70px;font-size:14.0px;line-height:14.0px;color:#2a2a2a;letter-spacing:0.4px;left:1648.50px;">Header</div>
<div class="r" style="left:1739.30px;top:849.40px;width:14.60px;height:14.60px;background:#fff;border-radius:3px;box-shadow:0 0 0 0.6px rgba(0,0,0,0.18), 0 0.5px 1px rgba(0,0,0,0.15);"></div>
<div class="t" style="top:849.95px;font-size:14.0px;line-height:14.0px;color:#2a2a2a;letter-spacing:0.4px;left:1759.70px;">Link</div>
<div class="r" style="left:1739.30px;top:872.30px;width:14.60px;height:14.60px;background:#fff;border-radius:3px;box-shadow:0 0 0 0.6px rgba(0,0,0,0.18), 0 0.5px 1px rgba(0,0,0,0.15);"></div>
<div class="t" style="top:872.75px;font-size:14.0px;line-height:14.0px;color:#2a2a2a;letter-spacing:0.4px;left:1759.70px;">Selected</div>
<div class="r" style="left:1530.70px;top:1176.00px;width:308.30px;height:1.60px;background:#e4dfdf;"></div>
</div></body></html>
